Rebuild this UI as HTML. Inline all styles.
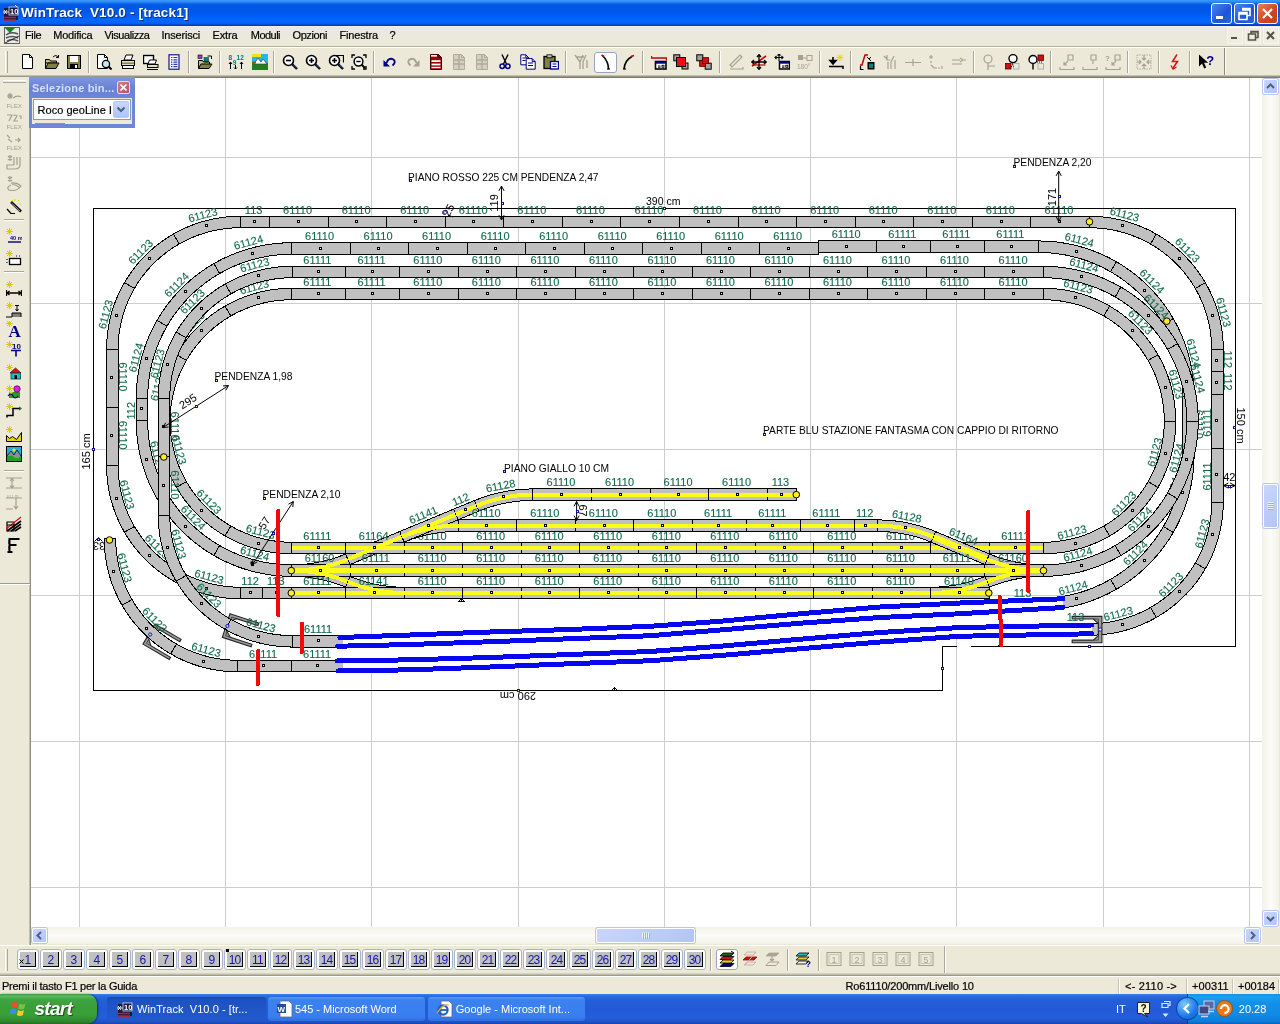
<!DOCTYPE html>
<html lang="it">
<head>
<meta charset="utf-8">
<title>WinTrack V10.0 - [track1]</title>
<style>
*{box-sizing:border-box;margin:0;padding:0}
html,body{width:1280px;height:1024px;overflow:hidden;background:#ece9d8;font-family:"Liberation Sans",sans-serif;font-size:11px;color:#000}
#root{position:absolute;left:0;top:0;width:1280px;height:1024px;will-change:transform}
.abs{position:absolute}
#titlebar{position:absolute;left:0;top:0;width:1280px;height:26px;background:linear-gradient(180deg,#3a9aff 0,#2f8af8 7%,#0a60e8 15%,#0057e4 22%,#0058e8 45%,#005cf2 60%,#0066ff 74%,#0a64ff 84%,#0060f4 90%,#0048c8 95%,#0034a8 100%)}
#titlebar .t{position:absolute;left:21px;top:4px;font-weight:bold;font-size:13.5px;color:#fff;white-space:pre;letter-spacing:.2px;text-shadow:1px 1px 0 #0a2a80}
.capbtn{position:absolute;top:3px;width:21px;height:21px;border:1px solid #fff;border-radius:3px;background:linear-gradient(135deg,#4a86f0,#1e55d8 60%,#2a63e0)}
.capbtn.close{background:linear-gradient(135deg,#e8805e,#d0431e 60%,#c8401e)}
#menubar{position:absolute;left:0;top:26px;width:1280px;height:20px;background:linear-gradient(180deg,#f2f2f6 0,#e9e8e4 10%,#ebe9dc 50%,#ece9d8 100%)}
#menubar span{position:absolute;top:3px;font-size:11px;white-space:pre;-webkit-text-stroke:.2px #000}
#toolbar{position:absolute;left:0;top:46px;width:1280px;height:31px;background:#ece9d8;border-top:1px solid #b4b0a0;box-shadow:inset 0 1px 0 #fff}
.sep{position:absolute;width:2px;border-left:1px solid #aca899;border-right:1px solid #fff}
#leftbar{position:absolute;left:0;top:77px;width:30px;height:868px;background:#ece9d8}
#canvas{position:absolute;left:31px;top:78px;width:1231px;height:849px;background:#fff;overflow:hidden}
#vscroll{position:absolute;left:1262px;top:78px;width:17px;height:849px;background:linear-gradient(90deg,#f3f2ea,#fcfcf8 50%,#f3f2ea)}
#hscroll{position:absolute;left:31px;top:927px;width:1231px;height:17px;background:linear-gradient(180deg,#f3f2ea,#fcfcf8 50%,#f3f2ea)}
.sbtn{position:absolute;width:15px;height:15px;border:1px solid #fff;border-radius:2px;background:linear-gradient(135deg,#c9d6fb,#b3c5f5);box-shadow:0 0 0 1px #b8c6ea}
#levelbar{position:absolute;left:0;top:945px;width:1280px;height:31px;background:#ece9d8}
.lv{position:absolute;top:4px;width:22px;height:21px;border:1px solid #aab4c8;border-radius:3px;background:#fff}
.lv i{position:absolute;left:2px;top:2px;width:16px;height:15px;background:#c0c0c0;border-right:1px solid #000;border-bottom:1px solid #000;font-style:normal;color:#1414b8;font-size:12px;line-height:17px;text-align:center;letter-spacing:-.8px;text-indent:0}
#status{position:absolute;left:0;top:976px;width:1280px;height:18px;background:#ece9d8;border-top:1px solid #fff}
#status span{position:absolute;top:2px;font-size:11px;white-space:pre;-webkit-text-stroke:.2px #000}
#taskbar{position:absolute;left:0;top:994px;width:1280px;height:30px;background:linear-gradient(180deg,#3a80e8 0,#2a6ae0 8%,#245edb 20%,#2259d6 50%,#245edc 80%,#1f50c4 94%,#1a42a8 100%)}
#start{position:absolute;left:0;top:0;width:97px;height:30px;border-radius:0 10px 10px 0;background:linear-gradient(180deg,#3f9a3f 0,#5cb85c 8%,#3fa33f 18%,#3a9f3a 45%,#38a038 70%,#2f8a2f 90%,#246c24 100%);box-shadow:1px 0 2px rgba(0,0,40,.5)}
#start b{position:absolute;left:35px;top:3px;font-size:19px;font-style:italic;color:#fff;text-shadow:1px 1px 1px #1a4a1a;letter-spacing:0}
.tb{position:absolute;top:3px;height:24px;border-radius:3px;background:linear-gradient(180deg,#5a98f0 0,#3c81f0 12%,#3a7ff0 80%,#2f6fe0 100%);color:#fff;font-size:11px;white-space:pre}
.tb.act{background:linear-gradient(180deg,#1a48b0 0,#1e52c4 15%,#2259cc 100%)}
.tb span{position:absolute;top:5px}
#tray{position:absolute;left:1187px;top:0;width:93px;height:30px;background:linear-gradient(180deg,#1a90e8 0,#16a0f0 10%,#1290e8 30%,#0f8ae6 70%,#0e7cd8 92%,#0a5cc0 100%);border-left:1px solid #0a3a90}
</style>
</head>
<body>
<div id="root">
<div id="titlebar">
<svg style="position:absolute;left:3px;top:4px" width="16" height="18" viewBox="0 0 16 18"><rect x="1" y="4" width="14" height="12" fill="#181840"/><rect x="6" y="3" width="9" height="8" fill="#181840" stroke="#e0e0f0" stroke-width=".8"/><text x="7" y="10" font-size="7.5" font-weight="bold" font-family="'Liberation Sans',sans-serif" fill="#fff">10</text><path d="M0,8 h6 M1,6 l3,4 M4,6 l-3,4" stroke="#e8e8e8" stroke-width="1" fill="none"/><path d="M1,13.5 h12 M1,16 h12" stroke="#c02020" stroke-width="1.6"/><path d="M12,1 l2,2" stroke="#fff" stroke-width="1"/></svg>
<span id="t1" style="position:absolute;left:21px;top:5px;font-size:13.5px;line-height:16.5px;color:#fff;font-weight:bold;font-style:normal;white-space:pre;letter-spacing:0.156px;text-shadow:1px 1px 0 #10307a;">WinTrack  V10.0 - [track1]</span>
<div class="capbtn" style="left:1211px"><svg width="19" height="19" viewBox="0 0 19 19"><rect x="4" y="12" width="7" height="3" fill="#fff"/></svg></div>
<div class="capbtn" style="left:1234px"><svg width="19" height="19" viewBox="0 0 19 19"><path d="M7,4.5 h8 v7 h-3 M7,6 h8" stroke="#fff" stroke-width="1.6" fill="none"/><path d="M4,8.5 h8 v7 h-8z M4,10 h8" stroke="#fff" stroke-width="1.6" fill="none"/></svg></div>
<div class="capbtn close" style="left:1257px"><svg width="19" height="19" viewBox="0 0 19 19"><path d="M5,5 L14,14 M14,5 L5,14" stroke="#fff" stroke-width="2.2" fill="none"/></svg></div>
</div>
<div id="menubar">
<svg style="position:absolute;left:4px;top:1px" width="16" height="17" viewBox="0 0 16 17"><rect x=".5" y=".5" width="15" height="16" fill="#e8ece8" stroke="#606060"/><path d="M1,1 h10 l-5,5z" fill="#208020"/><path d="M2,8 q5,-4 12,-1 M2,11 q6,-3 12,0 M3,14 q5,-3 11,0" stroke="#505050" stroke-width="1.4" fill="none"/><path d="M1,16 L15,9" stroke="#303030"/></svg>
<span id="t2" style="position:absolute;left:25px;top:2px;font-size:11px;line-height:14px;color:#000;font-weight:normal;font-style:normal;white-space:pre;letter-spacing:-0.359px;">File</span>
<span id="t3" style="position:absolute;left:53.2px;top:2px;font-size:11px;line-height:14px;color:#000;font-weight:normal;font-style:normal;white-space:pre;letter-spacing:-0.209px;">Modifica</span>
<span id="t4" style="position:absolute;left:104.5px;top:2px;font-size:11px;line-height:14px;color:#000;font-weight:normal;font-style:normal;white-space:pre;letter-spacing:-0.433px;">Visualizza</span>
<span id="t5" style="position:absolute;left:161.5px;top:2px;font-size:11px;line-height:14px;color:#000;font-weight:normal;font-style:normal;white-space:pre;letter-spacing:-0.205px;">Inserisci</span>
<span id="t6" style="position:absolute;left:212.5px;top:2px;font-size:11px;line-height:14px;color:#000;font-weight:normal;font-style:normal;white-space:pre;letter-spacing:-0.138px;">Extra</span>
<span id="t7" style="position:absolute;left:250.8px;top:2px;font-size:11px;line-height:14px;color:#000;font-weight:normal;font-style:normal;white-space:pre;letter-spacing:-0.534px;">Moduli</span>
<span id="t8" style="position:absolute;left:292.5px;top:2px;font-size:11px;line-height:14px;color:#000;font-weight:normal;font-style:normal;white-space:pre;letter-spacing:-0.4px;">Opzioni</span>
<span id="t9" style="position:absolute;left:339.5px;top:2px;font-size:11px;line-height:14px;color:#000;font-weight:normal;font-style:normal;white-space:pre;letter-spacing:-0.156px;">Finestra</span>
<span id="t10" style="position:absolute;left:389.5px;top:2px;font-size:11px;line-height:14px;color:#000;font-weight:normal;font-style:normal;white-space:pre;letter-spacing:-0.625px;">?</span>
<svg style="position:absolute;left:1227px;top:1px" width="16" height="17" viewBox="0 0 16 17"><rect x=".5" y=".5" width="15" height="16" fill="#efede2" stroke="#f6f5ee"/><path d="M4,11 h6" stroke="#55534a" stroke-width="2" fill="none"/></svg>
<svg style="position:absolute;left:1245px;top:1px" width="16" height="17" viewBox="0 0 16 17"><rect x=".5" y=".5" width="15" height="16" fill="#efede2" stroke="#f6f5ee"/><path d="M3.5,7 h7 v6 h-7z M6,7 v-2.5 h7 v6 h-2.5 M6,5 h7" stroke="#55534a" stroke-width="1.6" fill="none"/></svg>
<svg style="position:absolute;left:1263px;top:1px" width="16" height="17" viewBox="0 0 16 17"><rect x=".5" y=".5" width="15" height="16" fill="#efede2" stroke="#f6f5ee"/><path d="M4,5 l7,7 M11,5 l-7,7" stroke="#55534a" stroke-width="2" fill="none"/></svg>
</div>
<div id="toolbar">
<div style="position:absolute;left:5px;top:4px;width:3px;height:22px;border-left:1px solid #fff;border-right:1px solid #aca899"></div>
<svg class="ic" style="position:absolute;left:20px;top:7px" width="16" height="16" viewBox="0 0 16 16"><path d="M2.5,0.5 h7 l3,3 v11 h-10 z" fill="#fff" stroke="#000" stroke-width="1" /><path d="M9.5,0.5 v3 h3" fill="none" stroke="#000" stroke-width="1" /></svg>
<svg class="ic" style="position:absolute;left:44px;top:7px" width="16" height="16" viewBox="0 0 16 16"><path d="M1.5,5.5 h4 l1,1.5 h6 v2 h-11z" fill="#c0c080" stroke="#000" stroke-width="1" /><path d="M1.5,14.5 l2.5,-5.5 h11 l-3,5.5z" fill="#808040" stroke="#000" stroke-width="1" /><path d="M1.5,14.5 v-9" fill="none" stroke="#000" stroke-width="1" /><path d="M9,3 q3,-3 5.5,0.5 M14.5,3.5 v-2.5 M14.5,3.5 h-2.5" fill="none" stroke="#000" stroke-width="1" /></svg>
<svg class="ic" style="position:absolute;left:66px;top:7px" width="16" height="16" viewBox="0 0 16 16"><rect x="1.5" y="1.5" width="13" height="13" fill="#808040" stroke="#000" stroke-width="1"/><rect x="4" y="2" width="8" height="6" fill="#fff"/><rect x="4" y="10" width="8" height="4.5" fill="#000"/><rect x="9" y="11" width="2" height="3" fill="#fff"/></svg>
<div class="sep" style="left:88px;top:4px;height:22px"></div>
<svg class="ic" style="position:absolute;left:96px;top:7px" width="16" height="16" viewBox="0 0 16 16"><path d="M1.5,0.5 h7 l3,3 v11 h-10 z" fill="#fff" stroke="#000" stroke-width="1" /><path d="M8.5,0.5 v3 h3" fill="none" stroke="#000" stroke-width="1" /><circle cx="10" cy="10" r="3.6" fill="#c8e8f0" stroke="#000" stroke-width="1.3"/><path d="M12.5,12.5 L15.5,15.5" fill="none" stroke="#000" stroke-width="2" /></svg>
<svg class="ic" style="position:absolute;left:120px;top:7px" width="16" height="16" viewBox="0 0 16 16"><path d="M4,6 l2,-5 h7 l-2,5z" fill="#fff" stroke="#000" stroke-width="1" /><rect x="1.5" y="6.5" width="13" height="5" fill="#e0e0c0" stroke="#000" stroke-width="1"/><rect x="2.5" y="11.5" width="11" height="3" fill="#fff" stroke="#000" stroke-width="1"/><rect x="2" y="8.5" width="12" height="1.4" fill="#808040"/></svg>
<svg class="ic" style="position:absolute;left:143px;top:7px" width="16" height="16" viewBox="0 0 16 16"><rect x="0.5" y="1.5" width="10" height="8" fill="#fff" stroke="#000" stroke-width="1.4"/><path d="M5,10 l1.5,-4 h7 l-1.5,4z" fill="#fff" stroke="#000" stroke-width="1" /><rect x="4.5" y="10.5" width="10.5" height="3" fill="#e0e0c0" stroke="#000" stroke-width="1"/><path d="M4,15.5 h11" fill="none" stroke="#000" stroke-width="1" /></svg>
<svg class="ic" style="position:absolute;left:166px;top:7px" width="16" height="16" viewBox="0 0 16 16"><rect x="3" y="0.8" width="10" height="14.4" fill="#fff" stroke="#000080" stroke-width="1.1"/><path d="M5,3.5 h1.4 M7.4,3.5 h4" fill="none" stroke="#2040c0" stroke-width="1.2" /><path d="M5,5.8 h1.4 M7.4,5.8 h4" fill="none" stroke="#2040c0" stroke-width="1.2" /><path d="M5,8.1 h1.4 M7.4,8.1 h4" fill="none" stroke="#2040c0" stroke-width="1.2" /><path d="M5,10.4 h1.4 M7.4,10.4 h4" fill="none" stroke="#2040c0" stroke-width="1.2" /><path d="M5,12.7 h1.4 M7.4,12.7 h4" fill="none" stroke="#2040c0" stroke-width="1.2" /></svg>
<div class="sep" style="left:188px;top:4px;height:22px"></div>
<svg class="ic" style="position:absolute;left:197px;top:7px" width="16" height="16" viewBox="0 0 16 16"><rect x="1" y="1" width="4" height="3.4" fill="#a040c0" stroke="#000" stroke-width="0.6"/><rect x="7" y="3.5" width="4.5" height="4.5" fill="#008080" stroke="#204040" stroke-width="0.6"/><path d="M10.5,2 h4 v3" fill="none" stroke="#000" stroke-width="1" /><path d="M1.5,14.5 v-8 h4 l1,1.5 h6 v2" fill="#c0c080" stroke="#000" stroke-width="1" /><path d="M1.5,14.5 l2.5,-4.5 h11 l-3,4.5z" fill="#808040" stroke="#000" stroke-width="1" /></svg>
<div class="sep" style="left:219px;top:4px;height:22px"></div>
<svg class="ic" style="position:absolute;left:228px;top:7px" width="16" height="16" viewBox="0 0 16 16"><text x="0.5" y="6.2" font-size="6.5" font-weight="bold" fill="#008080" font-family="'Liberation Sans',sans-serif">8</text><text x="4.8" y="10.5" font-size="6.5" font-weight="bold" fill="#008080" font-family="'Liberation Sans',sans-serif">9</text><text x="8.6" y="6.2" font-size="6.5" font-weight="bold" fill="#008080" font-family="'Liberation Sans',sans-serif">12</text><path d="M2.5,15 v-7 M1,10 l1.5,-2 1.5,2 M13.5,15 v-7 M12,10 l1.5,-2 1.5,2 M7.5,11 v4 M6,13.5 l1.5,1.5 1.5,-1.5" fill="none" stroke="#000" stroke-width="1" /></svg>
<svg class="ic" style="position:absolute;left:252px;top:7px" width="16" height="16" viewBox="0 0 16 16"><rect x="0" y="0" width="16" height="16" fill="#20b8e8"/><rect x="0" y="0" width="9" height="3" fill="#f0e020"/><rect x="0" y="9" width="16" height="7" fill="#208020"/><path d="M2,10 l4,-6 3,4 2,-3 4,5z" fill="#fff" stroke="#404040" stroke-width="0.7" /><rect x="0" y="7.5" width="4" height="2" fill="#806020"/></svg>
<div class="sep" style="left:273px;top:4px;height:22px"></div>
<svg class="ic" style="position:absolute;left:282px;top:7px" width="16" height="16" viewBox="0 0 16 16"><circle cx="6.5" cy="6.5" r="5" fill="#fff" stroke="#000" stroke-width="1.6"/><path d="M10,10 L15,15" fill="none" stroke="#000" stroke-width="2.4" /><path d="M11,10.5 L15,14.5" fill="none" stroke="#3060c0" stroke-width="1" /><path d="M4,6.5 h5" fill="none" stroke="#000" stroke-width="1.6" /></svg>
<svg class="ic" style="position:absolute;left:305px;top:7px" width="16" height="16" viewBox="0 0 16 16"><circle cx="6.5" cy="6.5" r="5" fill="#fff" stroke="#000" stroke-width="1.6"/><path d="M10,10 L15,15" fill="none" stroke="#000" stroke-width="2.4" /><path d="M11,10.5 L15,14.5" fill="none" stroke="#3060c0" stroke-width="1" /><path d="M4,6.5 h5" fill="none" stroke="#000" stroke-width="1.6" /><path d="M6.5,4 v5" fill="none" stroke="#000" stroke-width="1.6" /></svg>
<svg class="ic" style="position:absolute;left:328px;top:7px" width="16" height="16" viewBox="0 0 16 16"><path d="M8,1.5 h7.5 v7" fill="none" stroke="#000" stroke-width="1.2" /><circle cx="6.5" cy="6.5" r="5" fill="#fff" stroke="#000" stroke-width="1.6"/><path d="M10,10 L15,15" fill="none" stroke="#000" stroke-width="2.4" /><path d="M11,10.5 L15,14.5" fill="none" stroke="#3060c0" stroke-width="1" /><path d="M4,6.5 h5" fill="none" stroke="#000" stroke-width="1.6" /><path d="M6.5,4 v5" fill="none" stroke="#000" stroke-width="1.6" /></svg>
<svg class="ic" style="position:absolute;left:351px;top:7px" width="16" height="16" viewBox="0 0 16 16"><path d="M1,4 v-3 h3 M12,1 h3 v3 M1,12 v3 h3 M15,12 v3 h-3" fill="none" stroke="#000" stroke-width="1.3" /><circle cx="7.5" cy="7.5" r="4.4" fill="#fff" stroke="#000" stroke-width="1.5"/><path d="M5.3,7.5 h4.4" fill="none" stroke="#000" stroke-width="1.4" /><path d="M10.6,10.6 L14,14" fill="none" stroke="#000" stroke-width="2" /></svg>
<div class="sep" style="left:373px;top:4px;height:22px"></div>
<svg class="ic" style="position:absolute;left:382px;top:7px" width="16" height="16" viewBox="0 0 16 16"><path d="M4.5,9 q2,-6 7,-3.5 q3,2.5 -1,6" fill="none" stroke="#000080" stroke-width="1.8" /><path d="M1.5,6 v6.5 h6.5z" fill="#000080" /></svg>
<svg class="ic" style="position:absolute;left:405px;top:7px" width="16" height="16" viewBox="0 0 16 16"><g transform="translate(16 0) scale(-1 1)"><path d="M4.5,9 q2,-6 7,-3.5 q3,2.5 -1,6" fill="none" stroke="#a6a292" stroke-width="1.8" /><path d="M1.5,6 v6.5 h6.5z" fill="#a6a292" /></g></svg>
<svg class="ic" style="position:absolute;left:428px;top:7px" width="16" height="16" viewBox="0 0 16 16"><path d="M2.5,0.5 h8 l3,3 v12 h-11 z" fill="#a00000" stroke="#400000" stroke-width="1" /><path d="M10.5,0.5 v3 h3" fill="none" stroke="#400000" stroke-width="1" /><rect x="3.5" y="6.2" width="9" height="1.8" fill="#fff"/><rect x="3.5" y="9.6" width="9" height="1.8" fill="#fff"/><rect x="3.5" y="12.8" width="9" height="1.4" fill="#fff"/><rect x="3" y="1" width="6" height="1.6" fill="#fff"/></svg>
<svg class="ic" style="position:absolute;left:451px;top:7px" width="16" height="16" viewBox="0 0 16 16"><path d="M2.5,0.5 h8 l3,3 v12 h-11 z" fill="#d4d0c0" stroke="#b0ac9c" stroke-width="1" /><path d="M10.5,0.5 v3 h3" fill="none" stroke="#b0ac9c" stroke-width="1" /><path d="M3,6 h10 M3,10 h10 M8,1 v14" fill="none" stroke="#b0ac9c" stroke-width="1.4" /></svg>
<svg class="ic" style="position:absolute;left:474px;top:7px" width="16" height="16" viewBox="0 0 16 16"><path d="M2.5,0.5 h8 l3,3 v12 h-11 z" fill="#d4d0c0" stroke="#b0ac9c" stroke-width="1" /><path d="M10.5,0.5 v3 h3" fill="none" stroke="#b0ac9c" stroke-width="1" /><path d="M3,6 h10 M3,10 h10 M8,1 v14" fill="none" stroke="#b0ac9c" stroke-width="1.4" /></svg>
<svg class="ic" style="position:absolute;left:497px;top:7px" width="16" height="16" viewBox="0 0 16 16"><path d="M5,.5 L9.5,10 M11,.5 L6.5,10" fill="none" stroke="#000" stroke-width="1.4" /><circle cx="5.2" cy="12.3" r="2.2" fill="none" stroke="#000080" stroke-width="1.5"/><circle cx="10.8" cy="12.3" r="2.2" fill="none" stroke="#000080" stroke-width="1.5"/></svg>
<svg class="ic" style="position:absolute;left:520px;top:7px" width="16" height="16" viewBox="0 0 16 16"><path d="M0.8,0.8 h5 l3,3 v7 h-8 z" fill="#fff" stroke="#000080" stroke-width="1" /><path d="M5.800000000000001,0.8 v3 h3" fill="none" stroke="#000080" stroke-width="1" /><path d="M6.2,4.6 h6 l3,3 v7.6 h-9 z" fill="#fff" stroke="#000080" stroke-width="1" /><path d="M12.2,4.6 v3 h3" fill="none" stroke="#000080" stroke-width="1" /><path d="M8,9 h5 M8,11.5 h5 M2.5,4 h3 M2.5,6.5 h3" fill="none" stroke="#000080" stroke-width="1" /></svg>
<svg class="ic" style="position:absolute;left:543px;top:7px" width="16" height="16" viewBox="0 0 16 16"><rect x="1" y="2.5" width="11" height="12" fill="#808040" stroke="#000" stroke-width="1.3"/><rect x="4" y="0.8" width="5" height="3" fill="#c0c0c0" stroke="#000" stroke-width="0.8"/><rect x="7.5" y="7.5" width="8" height="7.5" fill="#fff" stroke="#000080" stroke-width="1.3"/><path d="M9.5,10 h4 M9.5,12.5 h4" fill="none" stroke="#000080" stroke-width="1" /></svg>
<div class="sep" style="left:565px;top:4px;height:22px"></div>
<svg class="ic" style="position:absolute;left:574px;top:7px" width="16" height="16" viewBox="0 0 16 16"><path d="M1,1 l5,7 v7 M9,1 l-3,7 M12,1 l-3,7 v7 M13,6 v8 M3,3 h7" fill="none" stroke="#a6a292" stroke-width="1.3" /></svg>
<div style="position:absolute;left:594px;top:5px;width:23px;height:21px;background:#fff;border:1px solid #98a4c0;border-radius:3px"></div>
<svg class="ic" style="position:absolute;left:598px;top:7px" width="16" height="16" viewBox="0 0 16 16"><path d="M4.5,1.5 q6,6 6,13.5" fill="none" stroke="#000" stroke-width="1.6" /><path d="M3.5,1 l2.5,1.5" fill="none" stroke="#c00000" stroke-width="1.6" /><path d="M9,15 h3" fill="none" stroke="#000" stroke-width="1.2" /></svg>
<svg class="ic" style="position:absolute;left:621px;top:7px" width="16" height="16" viewBox="0 0 16 16"><path d="M3,15 q1,-9 8,-12.5" fill="none" stroke="#000" stroke-width="1.6" /><path d="M10,2.5 l3,-1" fill="none" stroke="#c00000" stroke-width="1.6" /><path d="M2,15 h3" fill="none" stroke="#000" stroke-width="1.2" /></svg>
<div class="sep" style="left:642px;top:4px;height:22px"></div>
<svg class="ic" style="position:absolute;left:651px;top:7px" width="16" height="16" viewBox="0 0 16 16"><path d="M.5,2 v2 h15 v2.5" fill="none" stroke="#c00000" stroke-width="1.3" /><rect x="4.5" y="7.5" width="10.5" height="7.5" fill="#fff" stroke="#000" stroke-width="1.6"/><rect x="4.5" y="7.5" width="10.5" height="2.2" fill="#000080"/><path d="M7,12 h2.5 M7,13.3 h2.5" fill="none" stroke="#000" stroke-width="0.9" /><rect x="11" y="11.3" width="2" height="2" fill="#fff" stroke="#000" stroke-width="0.9"/></svg>
<svg class="ic" style="position:absolute;left:673px;top:7px" width="16" height="16" viewBox="0 0 16 16"><rect x="0.8" y="0.8" width="6" height="6" fill="#a0a0a0" stroke="#000" stroke-width="1"/><rect x="9" y="9" width="6" height="6" fill="#a0a0a0" stroke="#000" stroke-width="1"/><rect x="3.5" y="3.5" width="9" height="9" fill="#ee1010" stroke="#000" stroke-width="1"/></svg>
<svg class="ic" style="position:absolute;left:696px;top:7px" width="16" height="16" viewBox="0 0 16 16"><rect x="0.8" y="0.8" width="6" height="6" fill="#a0a0a0" stroke="#000" stroke-width="1"/><rect x="9.2" y="9.2" width="6" height="6" fill="#a0a0a0" stroke="#000" stroke-width="1"/><rect x="3.6" y="6.4" width="6" height="6" fill="#d01010" stroke="#500000" stroke-width="0.8"/><rect x="6.6" y="3.6" width="6" height="6" fill="#d01010" stroke="#500000" stroke-width="0.8"/></svg>
<div class="sep" style="left:719px;top:4px;height:22px"></div>
<svg class="ic" style="position:absolute;left:728px;top:7px" width="16" height="16" viewBox="0 0 16 16"><path d="M2,11 L12,1 l2,2 L4,13z M2,15 h13 v-2" fill="none" stroke="#a6a292" stroke-width="1.2" /></svg>
<svg class="ic" style="position:absolute;left:751px;top:7px" width="16" height="16" viewBox="0 0 16 16"><path d="M1,12 L15,2" fill="none" stroke="#c00000" stroke-width="1.6" /><path d="M1.5,11 h13" fill="none" stroke="#c00000" stroke-width="1.2" /><path d="M8,1 v14 M1,8 h14 M6,3 l2,-2.4 2,2.4 M6,13 l2,2.4 2,-2.4 M3,6 l-2.4,2 2.4,2 M13,6 l2.4,2 -2.4,2" fill="none" stroke="#000" stroke-width="1.3" /></svg>
<svg class="ic" style="position:absolute;left:774px;top:7px" width="16" height="16" viewBox="0 0 16 16"><path d="M5,0 v7 M1,3.5 h8 M3.5,1.5 l1.5,-1.5 1.5,1.5 M2.5,2 l-1.5,1.5 1.5,1.5 M7.5,2 l1.5,1.5 -1.5,1.5" fill="none" stroke="#000" stroke-width="1.1" /><rect x="5.5" y="7.5" width="10" height="7.5" fill="#fff" stroke="#000" stroke-width="1.5"/><rect x="5.5" y="7.5" width="10" height="2.2" fill="#000080"/><path d="M8,12 h2.5 M8,13.3 h2.5" fill="none" stroke="#000" stroke-width="0.9" /><rect x="11.8" y="11.3" width="2" height="2" fill="#fff" stroke="#000" stroke-width="0.9"/></svg>
<svg class="ic" style="position:absolute;left:797px;top:7px" width="16" height="16" viewBox="0 0 16 16"><rect x="1" y="1" width="5" height="5" fill="#a6a292"/><rect x="10" y="1.5" width="5" height="5" fill="none" stroke="#a6a292" stroke-width="1"/><path d="M6,4 h4" fill="none" stroke="#a6a292" stroke-width="1" /><text x="0" y="15" font-size="6.5" font-weight="normal" fill="#a6a292" font-family="'Liberation Sans',sans-serif">180°</text></svg>
<div class="sep" style="left:819px;top:4px;height:22px"></div>
<svg class="ic" style="position:absolute;left:828px;top:7px" width="16" height="16" viewBox="0 0 16 16"><path d="M12.0,0 v7 M8.5,3.5 h7 M9.5,1 l5,5 M14.5,1 l-5,5" fill="none" stroke="#e8d800" stroke-width="1" /><path d="M5,3 v6 M2,6.5 l3,3.5 3,-3.5z" fill="#000" stroke="#000" stroke-width="1.6" /><path d="M1,12.5 h14 v2.5" fill="none" stroke="#000" stroke-width="1.5" /></svg>
<div class="sep" style="left:850px;top:4px;height:22px"></div>
<svg class="ic" style="position:absolute;left:859px;top:7px" width="16" height="16" viewBox="0 0 16 16"><path d="M1,11 l2,0 3,-10 h3" fill="none" stroke="#c00000" stroke-width="1.5" /><path d="M1.5,12 v3.5 h3" fill="none" stroke="#000" stroke-width="1.2" /><rect x="8.5" y="8" width="7" height="7.5" fill="#000"/><rect x="10" y="9.5" width="4" height="4.5" fill="#008080"/><path d="M8,3 l4,4 M12,3 l-2,2" fill="none" stroke="#000" stroke-width="1" /></svg>
<svg class="ic" style="position:absolute;left:882px;top:7px" width="16" height="16" viewBox="0 0 16 16"><path d="M2,2 l3,3 M5,1 v5 h3 M12,2 l-3,6 v7 M13,6 v9 M6,8 v7" fill="none" stroke="#a6a292" stroke-width="1.2" /></svg>
<svg class="ic" style="position:absolute;left:905px;top:7px" width="16" height="16" viewBox="0 0 16 16"><path d="M0,8.5 h16 M8,5 v7" fill="none" stroke="#a6a292" stroke-width="1.2" /></svg>
<svg class="ic" style="position:absolute;left:928px;top:7px" width="16" height="16" viewBox="0 0 16 16"><path d="M3,1 v4 M1,3 h4 M3,7 v2 M3,11 l3,3 h3 M10,14 h2 M14,12 v3" fill="none" stroke="#a6a292" stroke-width="1.2" /></svg>
<svg class="ic" style="position:absolute;left:951px;top:7px" width="16" height="16" viewBox="0 0 16 16"><path d="M1,6 h8 M1,10 h10 M9,4 l3,2 -3,2 M13,6 h2" fill="none" stroke="#a6a292" stroke-width="1.2" /></svg>
<div class="sep" style="left:973px;top:4px;height:22px"></div>
<svg class="ic" style="position:absolute;left:982px;top:7px" width="16" height="16" viewBox="0 0 16 16"><circle cx="6" cy="5" r="4" fill="none" stroke="#a6a292" stroke-width="1.2"/><path d="M6,9 v7 M6,12 h7" fill="none" stroke="#a6a292" stroke-width="1.2" /></svg>
<svg class="ic" style="position:absolute;left:1004px;top:7px" width="16" height="16" viewBox="0 0 16 16"><circle cx="9" cy="4.6" r="4" fill="#fff" stroke="#000" stroke-width="1.4"/><path d="M9,8.5 v3" fill="none" stroke="#000" stroke-width="1.4" /><rect x="1.5" y="9.5" width="5.5" height="5.5" fill="#d01010" stroke="#500000" stroke-width="0.8"/><rect x="9.5" y="9.5" width="5.5" height="5.5" fill="#e8e8e0" stroke="#b0b0a8" stroke-width="1"/><path d="M7,12.5 h2.5" fill="none" stroke="#000" stroke-width="1" stroke-dasharray="1 1"/></svg>
<svg class="ic" style="position:absolute;left:1028px;top:7px" width="16" height="16" viewBox="0 0 16 16"><circle cx="5" cy="5.5" r="4" fill="#fff" stroke="#000" stroke-width="1.4"/><path d="M5,9.5 v6" fill="none" stroke="#000" stroke-width="1.4" /><rect x="10" y="1" width="5.5" height="5.5" fill="#d01010" stroke="#500000" stroke-width="0.8"/><rect x="10" y="9.5" width="5.5" height="5.5" fill="#e8e8e0" stroke="#b0b0a8" stroke-width="1"/><path d="M9,8 h6" fill="none" stroke="#000" stroke-width="1" stroke-dasharray="1 1"/></svg>
<div class="sep" style="left:1050px;top:4px;height:22px"></div>
<svg class="ic" style="position:absolute;left:1059px;top:7px" width="16" height="16" viewBox="0 0 16 16"><path d="M9,1 h5 v5 h-5z M9,7 l-4,4 M5,8 v3 h3 M1,13 v2.5 h14 v-2.5" fill="none" stroke="#a6a292" stroke-width="1.2" /></svg>
<svg class="ic" style="position:absolute;left:1082px;top:7px" width="16" height="16" viewBox="0 0 16 16"><path d="M9,1 h5 v5 h-5z M1,13 v2.5 h14 v-2.5 M11,6 v4" fill="none" stroke="#a6a292" stroke-width="1.2" /></svg>
<svg class="ic" style="position:absolute;left:1105px;top:7px" width="16" height="16" viewBox="0 0 16 16"><path d="M10,1 h5 v5 h-5z M11,7 l-4,4 M7,8 v3 h3 M1,13 v2.5 h14 v-2.5" fill="none" stroke="#a6a292" stroke-width="1.2" /><text x="0" y="7" font-size="8" font-weight="bold" fill="#a6a292" font-family="'Liberation Sans',sans-serif">?</text></svg>
<div class="sep" style="left:1127px;top:4px;height:22px"></div>
<svg class="ic" style="position:absolute;left:1136px;top:7px" width="16" height="16" viewBox="0 0 16 16"><path d="M1,1 h14 v14 h-14z" fill="none" stroke="#a6a292" stroke-width="1" stroke-dasharray="1.2 1.2"/><path d="M8,1 v5 M6,4 l2,2 2,-2 M8,15 v-5 M6,12 l2,-2 2,2 M1,8 h4 M3,6 l2,2 -2,2 M15,8 h-4 M13,6 l-2,2 2,2" fill="none" stroke="#a6a292" stroke-width="1.2" /></svg>
<div class="sep" style="left:1158px;top:4px;height:22px"></div>
<svg class="ic" style="position:absolute;left:1168px;top:7px" width="16" height="16" viewBox="0 0 16 16"><path d="M9,0.5 L4.5,7.5 h5 L5,14" fill="none" stroke="#e01010" stroke-width="1.5" /><path d="M3,11.5 l2,3.5 3.5,-2" fill="none" stroke="#e01010" stroke-width="1.3" /></svg>
<div class="sep" style="left:1189px;top:4px;height:22px"></div>
<svg class="ic" style="position:absolute;left:1198px;top:7px" width="16" height="16" viewBox="0 0 16 16"><path d="M1,.5 v12 l3,-3 2.2,5 2,-1 -2.2,-4.8 h4.2z" fill="#000" /><text x="8.2" y="11" font-size="13" font-weight="bold" fill="#000080" font-family="'Liberation Sans',sans-serif">?</text></svg>
<div style="position:absolute;left:1224px;top:1px;width:2px;height:28px;border-left:1px solid #8c8878;border-right:1px solid #fff"></div>
<div style="position:absolute;left:0;top:28px;width:1280px;height:3px;background:linear-gradient(180deg,#d8d4c4,#9c9888 50%,#6c6a60)"></div>
</div>
<div id="leftbar">
<div style="position:absolute;left:3px;top:3px;width:23px;height:3px;border-top:1px solid #fff;border-bottom:1px solid #aca899"></div>
<svg class="ic" style="position:absolute;left:6px;top:15px" width="16" height="16" viewBox="0 0 16 16"><path d="M4,1 v6 M1,4 h6 M2,2 l4,4 M6,2 l-4,4 M7,6 q4,-3 8,-1" fill="none" stroke="#a6a292" stroke-width="1.2" /><text x="0.5" y="16" font-size="6.2" font-weight="normal" fill="#a6a292" font-family="'Liberation Sans',sans-serif">FLEX</text></svg>
<svg class="ic" style="position:absolute;left:6px;top:36px" width="16" height="16" viewBox="0 0 16 16"><path d="M1,2 h5 l-3,6 M8,3 q1,-2 3,0 l-3,5 h4 M13,3 h2 v3" fill="none" stroke="#a6a292" stroke-width="1.2" /><text x="0.5" y="16" font-size="6.2" font-weight="normal" fill="#a6a292" font-family="'Liberation Sans',sans-serif">FLEX</text></svg>
<svg class="ic" style="position:absolute;left:6px;top:57px" width="16" height="16" viewBox="0 0 16 16"><path d="M1,1 l3,3 M2,5 l4,3 M9,6 h5 M12,4 l2,2 -2,2" fill="none" stroke="#a6a292" stroke-width="1.2" /><text x="0.5" y="16" font-size="6.2" font-weight="normal" fill="#a6a292" font-family="'Liberation Sans',sans-serif">FLEX</text></svg>
<svg class="ic" style="position:absolute;left:6px;top:78px" width="16" height="16" viewBox="0 0 16 16"><path d="M2,1 l4,4 M6,1 l-4,4 M4,0 v6 M8,2 v8 M11,2 v8 M14,2 v8 q0,4 -6,4 h-7 v-4 h7" fill="none" stroke="#a6a292" stroke-width="1.2" /></svg>
<svg class="ic" style="position:absolute;left:6px;top:99px" width="16" height="16" viewBox="0 0 16 16"><path d="M2,1 l4,4 M6,1 l-4,4 M4,0 v6 M5,7 q6,-1 10,3 q-4,6 -12,4 q-3,-3 2,-5 M6,8 q5,1 8,4" fill="none" stroke="#a6a292" stroke-width="1.2" /></svg>
<svg class="ic" style="position:absolute;left:6px;top:121px" width="16" height="16" viewBox="0 0 16 16"><path d="M5,4 L15,13.5" fill="none" stroke="#000" stroke-width="2.6" /><path d="M5.5,5 L14,13" fill="none" stroke="#fff" stroke-width="0.7" /><path d="M1,11 l4,4.5 h4" fill="none" stroke="#000" stroke-width="1.2" /><path d="M9,1 v2 M12,3 l1,-1 M13,6 h2 M6,2 l1,1" fill="none" stroke="#e8d800" stroke-width="1.1" /></svg>
<div style="position:absolute;left:4px;top:142px;width:20px;height:2px;border-top:1px solid #aca899;border-bottom:1px solid #fff"></div>
<svg class="ic" style="position:absolute;left:6px;top:151px" width="16" height="16" viewBox="0 0 16 16"><path d="M3.5,0 v7 M0,3.5 h7 M1,1 l5,5 M6,1 l-5,5" fill="none" stroke="#d4c818" stroke-width="1" /><path d="M2,14 h13" fill="none" stroke="#000080" stroke-width="1.4" /><text x="4" y="12" font-size="5.5" font-weight="bold" fill="#000080" font-family="'Liberation Sans',sans-serif">40 m</text></svg>
<svg class="ic" style="position:absolute;left:6px;top:173px" width="16" height="16" viewBox="0 0 16 16"><path d="M3.5,0 v7 M0,3.5 h7 M1,1 l5,5 M6,1 l-5,5" fill="none" stroke="#d4c818" stroke-width="1" /><rect x="3.5" y="8.5" width="11" height="6" fill="#fff" stroke="#000" stroke-width="1.3"/><path d="M1,9 v1 M1,12 v1 M10,6 h1 M13,6 h1" fill="none" stroke="#000080" stroke-width="1.2" /></svg>
<div style="position:absolute;left:4px;top:194px;width:20px;height:2px;border-top:1px solid #aca899;border-bottom:1px solid #fff"></div>
<svg class="ic" style="position:absolute;left:6px;top:204px" width="16" height="16" viewBox="0 0 16 16"><path d="M3.5,0 v7 M0,3.5 h7 M1,1 l5,5 M6,1 l-5,5" fill="none" stroke="#d4c818" stroke-width="1" /><path d="M.5,12 h15 M.5,9 v6 M15.5,9 v6 M3.5,10 l-2.5,2 2.5,2 M12.5,10 l2.5,2 -2.5,2" fill="none" stroke="#000" stroke-width="1.3" /></svg>
<svg class="ic" style="position:absolute;left:6px;top:225px" width="16" height="16" viewBox="0 0 16 16"><path d="M3.5,0 v7 M0,3.5 h7 M1,1 l5,5 M6,1 l-5,5" fill="none" stroke="#d4c818" stroke-width="1" /><path d="M0,15 h6 v-4 h9 v4" fill="#808080" stroke="#000" stroke-width="1" /><path d="M11,3 v6 M9,3.5 h4 M9.5,7 l1.5,2 1.5,-2" fill="none" stroke="#000" stroke-width="1" /></svg>
<svg class="ic" style="position:absolute;left:6px;top:244px" width="16" height="16" viewBox="0 0 16 16"><path d="M3.5,-1 v7 M0,2.5 h7 M1,0 l5,5 M6,0 l-5,5" fill="none" stroke="#d4c818" stroke-width="1" /><text x="2.5" y="16" font-size="17" font-weight="bold" fill="#000080" font-family="'Liberation Serif',serif">A</text></svg>
<svg class="ic" style="position:absolute;left:6px;top:264px" width="16" height="16" viewBox="0 0 16 16"><path d="M3.5,0 v7 M0,3.5 h7 M1,1 l5,5 M6,1 l-5,5" fill="none" stroke="#d4c818" stroke-width="1" /><text x="6" y="8" font-size="8" font-weight="bold" fill="#000080" font-family="'Liberation Sans',sans-serif">10</text><path d="M5,9.5 h10 M10,9.5 v6" fill="none" stroke="#000080" stroke-width="1.6" /></svg>
<svg class="ic" style="position:absolute;left:6px;top:287px" width="16" height="16" viewBox="0 0 16 16"><path d="M3.5,0 v7 M0,3.5 h7 M1,1 l5,5 M6,1 l-5,5" fill="none" stroke="#d4c818" stroke-width="1" /><path d="M4,9 l5.5,-5 5.5,5z" fill="#e01010" stroke="#800000" stroke-width="0.8" /><rect x="5" y="9" width="9.5" height="6" fill="#20c0c0" stroke="#004040" stroke-width="0.8"/><rect x="8.5" y="11" width="2.5" height="4" fill="#000"/></svg>
<svg class="ic" style="position:absolute;left:6px;top:307px" width="16" height="16" viewBox="0 0 16 16"><path d="M3.5,1 v7 M0,4.5 h7 M1,2 l5,5 M6,2 l-5,5" fill="none" stroke="#d4c818" stroke-width="1" /><rect x="3" y="8" width="11" height="6" fill="#20a020"/><circle cx="11" cy="5" r="3.2" fill="#e020e0" stroke="#600060" stroke-width="0.8"/><path d="M2,12 q3,-4 5,0 q2,4 5,0" fill="none" stroke="#000080" stroke-width="1.2" /><circle cx="5" cy="8" r="1.6" fill="#f0e020"/></svg>
<svg class="ic" style="position:absolute;left:6px;top:326px" width="16" height="16" viewBox="0 0 16 16"><path d="M3.5,0 v7 M0,3.5 h7 M1,1 l5,5 M6,1 l-5,5" fill="none" stroke="#d4c818" stroke-width="1" /><path d="M1,14.5 v-2 h6 v-7 h7.5" fill="none" stroke="#000" stroke-width="1.5" /><path d="M13,4 l2,1.5 -2,1.5" fill="none" stroke="#208020" stroke-width="1.2" /></svg>
<svg class="ic" style="position:absolute;left:6px;top:349px" width="16" height="16" viewBox="0 0 16 16"><path d="M3.5,0 v7 M0,3.5 h7 M1,1 l5,5 M6,1 l-5,5" fill="none" stroke="#d4c818" stroke-width="1" /><path d="M0.5,15.5 v-6 l3,3 3,-2 4,3 5,-7 v9z" fill="#e8d020" stroke="#000" stroke-width="1" /></svg>
<svg class="ic" style="position:absolute;left:6px;top:369px" width="16" height="16" viewBox="0 0 16 16"><rect x="0.5" y="0.5" width="15" height="15" fill="#20b0e0" stroke="#000" stroke-width="1"/><path d="M1,15 v-5 l4,-5 3,4 3,-5 4,6 v5z" fill="#909090" stroke="#000" stroke-width="0.7" /><path d="M1,11 q4,-3 7,0 q4,3 7,-1 v5 h-14z" fill="#20a020" /><circle cx="8" cy="4" r="1.6" fill="#f0e020"/></svg>
<div style="position:absolute;left:4px;top:393px;width:20px;height:2px;border-top:1px solid #aca899;border-bottom:1px solid #fff"></div>
<svg class="ic" style="position:absolute;left:6px;top:398px" width="16" height="16" viewBox="0 0 16 16"><path d="M0,3 h16 M0,13 h16 M6,3 v10 M4,6 l2,-2.5 2,2.5 M4,10.5 l2,2.5 2,-2.5" fill="none" stroke="#a6a292" stroke-width="1.2" /></svg>
<svg class="ic" style="position:absolute;left:6px;top:418px" width="16" height="16" viewBox="0 0 16 16"><path d="M0,3 h16 M10,3 v11 M8,11 l2,3 2,-3 M0,14 h7" fill="none" stroke="#a6a292" stroke-width="1.2" /><text x="0" y="2.6" font-size="4.5" font-weight="normal" fill="#a6a292" font-family="'Liberation Sans',sans-serif">101 m</text></svg>
<svg class="ic" style="position:absolute;left:6px;top:439px" width="16" height="16" viewBox="0 0 16 16"><path d="M1,6 h7 v9 h-7z" fill="none" stroke="#000" stroke-width="1.2" /><path d="M1,15 L15,5 M5,15 L15,8 M9,15 L15,11" fill="none" stroke="#000" stroke-width="1.8" /><path d="M0,13 L15,1" fill="none" stroke="#e01010" stroke-width="1.3" /><path d="M1,9 h7" fill="none" stroke="#000" stroke-width="1" /></svg>
<svg class="ic" style="position:absolute;left:6px;top:460px" width="16" height="16" viewBox="0 0 16 16"><path d="M3.5,1 v14 M3.5,2 h10 M3.5,8 h7 M1.5,15 h5" fill="none" stroke="#000" stroke-width="2" /><path d="M2,4 h2 M2,6 h2 M2,10 h2 M2,12 h2" fill="none" stroke="#000" stroke-width="1" /></svg>
<div style="position:absolute;left:29px;top:0;width:2px;height:868px;background:linear-gradient(90deg,#d8d4c4,#7c7a70)"></div>
<div style="position:absolute;left:0;top:506px;width:30px;height:2px;border-top:1px solid #9c9a88;border-bottom:1px solid #fff"></div>
</div>
<div id="canvas"><svg width="1231" height="849" viewBox="31 78 1231 849" style="position:absolute;left:0;top:0">
<g shape-rendering="crispEdges" stroke="#cdcdcd" stroke-width="1">
<line x1="79.5" y1="78" x2="79.5" y2="927" stroke="#cdcdcd" stroke-width="1" />
<line x1="225.5" y1="78" x2="225.5" y2="927" stroke="#cdcdcd" stroke-width="1" />
<line x1="371.5" y1="78" x2="371.5" y2="927" stroke="#cdcdcd" stroke-width="1" />
<line x1="518.5" y1="78" x2="518.5" y2="927" stroke="#cdcdcd" stroke-width="1" />
<line x1="664.5" y1="78" x2="664.5" y2="927" stroke="#cdcdcd" stroke-width="1" />
<line x1="810.5" y1="78" x2="810.5" y2="927" stroke="#cdcdcd" stroke-width="1" />
<line x1="956.5" y1="78" x2="956.5" y2="927" stroke="#cdcdcd" stroke-width="1" />
<line x1="1103.5" y1="78" x2="1103.5" y2="927" stroke="#cdcdcd" stroke-width="1" />
<line x1="1249.5" y1="78" x2="1249.5" y2="927" stroke="#cdcdcd" stroke-width="1" />
<line x1="31" y1="157.5" x2="1262" y2="157.5" stroke="#cdcdcd" stroke-width="1" />
<line x1="31" y1="303.5" x2="1262" y2="303.5" stroke="#cdcdcd" stroke-width="1" />
<line x1="31" y1="449.5" x2="1262" y2="449.5" stroke="#cdcdcd" stroke-width="1" />
<line x1="31" y1="595.5" x2="1262" y2="595.5" stroke="#cdcdcd" stroke-width="1" />
<line x1="31" y1="741.5" x2="1262" y2="741.5" stroke="#cdcdcd" stroke-width="1" />
<line x1="31" y1="887.5" x2="1262" y2="887.5" stroke="#cdcdcd" stroke-width="1" />
</g>
<g shape-rendering="crispEdges" fill="none" stroke="#000" stroke-width="1">
<polyline points="956.5,646.5 942.5,646.5 942.5,690.5 93.5,690.5 93.5,208.5 1235.5,208.5 1235.5,646.5 971,646.5"/>
</g>
<style>.b{fill:#c0c0c0;stroke:#000;stroke-width:1px;shape-rendering:crispEdges}.y{fill:none;stroke:#fbfb1c;stroke-width:4px;shape-rendering:crispEdges}.d{fill:#000;shape-rendering:crispEdges}.w{fill:#fff;shape-rendering:crispEdges}.l{font-family:"Liberation Sans",sans-serif;font-size:11px;fill:#126a4c;text-anchor:middle;stroke:#126a4c;stroke-width:.12px}</style>
<polygon class="b" points="240.2,227.75 269.48,227.75 269.48,216.25 240.2,216.25"/>
<path class="d" d="M253,220h3v3h-3z"/><path class="w" d="M254,221h1v1h-1z"/>
<text class="l" x="253.64" y="213.7">113</text>
<polygon class="b" points="269.48,227.75 328.05,227.75 328.05,216.25 269.48,216.25"/>
<path class="d" d="M297,220h3v3h-3z"/><path class="w" d="M298,221h1v1h-1z"/>
<text class="l" x="297.56" y="213.7">61110</text>
<polygon class="b" points="328.05,227.75 386.61,227.75 386.61,216.25 328.05,216.25"/>
<path class="d" d="M355,220h3v3h-3z"/><path class="w" d="M356,221h1v1h-1z"/>
<text class="l" x="356.13" y="213.7">61110</text>
<polygon class="b" points="386.61,227.75 445.18,227.75 445.18,216.25 386.61,216.25"/>
<path class="d" d="M414,220h3v3h-3z"/><path class="w" d="M415,221h1v1h-1z"/>
<text class="l" x="414.7" y="213.7">61110</text>
<polygon class="b" points="445.18,227.75 503.74,227.75 503.74,216.25 445.18,216.25"/>
<path class="d" d="M472,220h3v3h-3z"/><path class="w" d="M473,221h1v1h-1z"/>
<text class="l" x="473.26" y="213.7">61110</text>
<polygon class="b" points="503.74,227.75 562.31,227.75 562.31,216.25 503.74,216.25"/>
<path class="d" d="M531,220h3v3h-3z"/><path class="w" d="M532,221h1v1h-1z"/>
<text class="l" x="531.83" y="213.7">61110</text>
<polygon class="b" points="562.31,227.75 620.88,227.75 620.88,216.25 562.31,216.25"/>
<path class="d" d="M590,220h3v3h-3z"/><path class="w" d="M591,221h1v1h-1z"/>
<text class="l" x="590.39" y="213.7">61110</text>
<polygon class="b" points="620.88,227.75 679.44,227.75 679.44,216.25 620.88,216.25"/>
<path class="d" d="M648,220h3v3h-3z"/><path class="w" d="M649,221h1v1h-1z"/>
<text class="l" x="648.96" y="213.7">61110</text>
<polygon class="b" points="679.44,227.75 738.01,227.75 738.01,216.25 679.44,216.25"/>
<path class="d" d="M707,220h3v3h-3z"/><path class="w" d="M708,221h1v1h-1z"/>
<text class="l" x="707.52" y="213.7">61110</text>
<polygon class="b" points="738.01,227.75 796.57,227.75 796.57,216.25 738.01,216.25"/>
<path class="d" d="M765,220h3v3h-3z"/><path class="w" d="M766,221h1v1h-1z"/>
<text class="l" x="766.09" y="213.7">61110</text>
<polygon class="b" points="796.57,227.75 855.14,227.75 855.14,216.25 796.57,216.25"/>
<path class="d" d="M824,220h3v3h-3z"/><path class="w" d="M825,221h1v1h-1z"/>
<text class="l" x="824.65" y="213.7">61110</text>
<polygon class="b" points="855.14,227.75 913.7,227.75 913.7,216.25 855.14,216.25"/>
<path class="d" d="M882,220h3v3h-3z"/><path class="w" d="M883,221h1v1h-1z"/>
<text class="l" x="883.22" y="213.7">61110</text>
<polygon class="b" points="913.7,227.75 972.27,227.75 972.27,216.25 913.7,216.25"/>
<path class="d" d="M941,220h3v3h-3z"/><path class="w" d="M942,221h1v1h-1z"/>
<text class="l" x="941.79" y="213.7">61110</text>
<polygon class="b" points="972.27,227.75 1030.83,227.75 1030.83,216.25 972.27,216.25"/>
<path class="d" d="M1000,220h3v3h-3z"/><path class="w" d="M1001,221h1v1h-1z"/>
<text class="l" x="1000.35" y="213.7">61110</text>
<polygon class="b" points="1030.83,227.75 1089.4,227.75 1089.4,216.25 1030.83,216.25"/>
<path class="d" d="M1058,220h3v3h-3z"/><path class="w" d="M1059,221h1v1h-1z"/>
<text class="l" x="1058.92" y="213.7">61110</text>
<polygon class="b" points="1089.4,216.25 1097.19,216.47 1104.94,217.15 1112.65,218.27 1120.28,219.83 1127.8,221.83 1135.19,224.27 1142.43,227.12 1149.49,230.39 1156.35,234.06 1150.55,244.02 1144.29,240.67 1137.84,237.69 1131.23,235.08 1124.48,232.86 1117.61,231.03 1110.64,229.6 1103.6,228.57 1096.51,227.96 1089.4,227.75"/>
<path class="d" d="M1121,224h3v3h-3z"/><path class="w" d="M1122,225h1v1h-1z"/>
<text class="l" transform="translate(1123.54 218.05) rotate(15)">61123</text>
<polygon class="b" points="1156.35,234.06 1162.98,238.12 1169.36,242.56 1175.47,247.35 1181.28,252.49 1186.79,257.96 1191.97,263.74 1196.8,269.81 1201.27,276.14 1205.36,282.72 1195.32,288.48 1191.59,282.46 1187.5,276.68 1183.09,271.14 1178.36,265.86 1173.33,260.86 1168.02,256.17 1162.44,251.78 1156.61,247.73 1150.55,244.02"/>
<path class="d" d="M1178,257h3v3h-3z"/><path class="w" d="M1179,258h1v1h-1z"/>
<text class="l" transform="translate(1184.75 252.83) rotate(45)">61123</text>
<polygon class="b" points="1205.36,282.72 1209.05,289.53 1212.34,296.54 1215.22,303.73 1217.67,311.07 1219.67,318.54 1221.23,326.11 1222.35,333.77 1223.03,341.47 1223.25,349.2 1211.71,349.2 1211.5,342.14 1210.88,335.1 1209.85,328.11 1208.41,321.19 1206.57,314.37 1204.33,307.66 1201.7,301.1 1198.7,294.69 1195.32,288.48"/>
<path class="d" d="M1211,314h3v3h-3z"/><path class="w" d="M1212,315h1v1h-1z"/>
<text class="l" transform="translate(1219.87 313.24) rotate(75)">61123</text>
<polygon class="b" points="1211.71,349.2 1211.71,371.8 1223.25,371.8 1223.25,349.2"/>
<path class="d" d="M1215,359h3v3h-3z"/><path class="w" d="M1216,360h1v1h-1z"/>
<text class="l" transform="translate(1224.4 359.29) rotate(90)">112</text>
<polygon class="b" points="1211.71,371.8 1211.71,394.4 1223.25,394.4 1223.25,371.8"/>
<path class="d" d="M1215,381h3v3h-3z"/><path class="w" d="M1216,382h1v1h-1z"/>
<text class="l" transform="translate(1224.4 381.89) rotate(90)">112</text>
<polygon class="b" points="1211.71,394.4 1211.71,448.35 1223.25,448.35 1223.25,394.4"/>
<path class="d" d="M1215,419h3v3h-3z"/><path class="w" d="M1216,420h1v1h-1z"/>
<text class="l" transform="translate(1210.55 422.57) rotate(270)">61111</text>
<polygon class="b" points="1211.71,448.35 1211.71,502.3 1223.25,502.3 1223.25,448.35"/>
<path class="d" d="M1215,473h3v3h-3z"/><path class="w" d="M1216,474h1v1h-1z"/>
<text class="l" transform="translate(1210.55 476.52) rotate(270)">61111</text>
<polygon class="b" points="1223.25,502.3 1223.03,510.03 1222.35,517.73 1221.23,525.39 1219.67,532.96 1217.67,540.43 1215.22,547.77 1212.34,554.96 1209.05,561.97 1205.36,568.78 1195.32,563.02 1198.7,556.81 1201.7,550.4 1204.33,543.84 1206.57,537.13 1208.41,530.31 1209.85,523.39 1210.88,516.4 1211.5,509.36 1211.71,502.3"/>
<path class="d" d="M1211,533h3v3h-3z"/><path class="w" d="M1212,534h1v1h-1z"/>
<text class="l" transform="translate(1205.75 534.5) rotate(285)">61123</text>
<polygon class="b" points="1205.36,568.78 1201.27,575.36 1196.8,581.69 1191.97,587.76 1186.79,593.54 1181.28,599.01 1175.47,604.15 1169.36,608.94 1162.98,613.38 1156.35,617.44 1150.55,607.48 1156.61,603.77 1162.44,599.72 1168.02,595.33 1173.33,590.64 1178.36,585.64 1183.09,580.36 1187.5,574.82 1191.59,569.04 1195.32,563.02"/>
<path class="d" d="M1178,590h3v3h-3z"/><path class="w" d="M1179,591h1v1h-1z"/>
<text class="l" transform="translate(1173.5 587.51) rotate(315)">61123</text>
<polygon class="b" points="1156.35,617.44 1149.49,621.11 1142.43,624.38 1135.19,627.23 1127.8,629.67 1120.28,631.67 1112.65,633.23 1104.94,634.35 1097.19,635.03 1089.4,635.25 1089.4,623.75 1096.51,623.54 1103.6,622.93 1110.64,621.9 1117.61,620.47 1124.48,618.64 1131.23,616.42 1137.84,613.81 1144.29,610.83 1150.55,607.48"/>
<path class="d" d="M1121,623h3v3h-3z"/><path class="w" d="M1122,624h1v1h-1z"/>
<text class="l" transform="translate(1119.23 617.5) rotate(345)">61123</text>
<polygon class="b" points="240.2,216.25 232.43,216.47 224.68,217.15 216.99,218.27 209.37,219.83 201.86,221.83 194.48,224.26 187.25,227.11 180.2,230.38 173.36,234.04 179.14,243.99 185.39,240.64 191.83,237.66 198.43,235.06 205.18,232.84 212.04,231.01 218.99,229.59 226.02,228.56 233.1,227.95 240.2,227.74"/>
<path class="d" d="M205,224h3v3h-3z"/><path class="w" d="M206,225h1v1h-1z"/>
<text class="l" transform="translate(203.78 218.67) rotate(345)">61123</text>
<polygon class="b" points="173.36,234.04 166.74,238.09 160.37,242.52 154.27,247.31 148.46,252.45 142.96,257.91 137.79,263.67 132.97,269.73 128.51,276.06 124.43,282.63 134.44,288.37 138.17,282.37 142.25,276.59 146.65,271.06 151.38,265.79 156.4,260.8 161.71,256.11 167.28,251.74 173.1,247.69 179.14,243.99"/>
<path class="d" d="M148,257h3v3h-3z"/><path class="w" d="M149,258h1v1h-1z"/>
<text class="l" transform="translate(143.29 254.47) rotate(315)">61123</text>
<polygon class="b" points="124.43,282.63 120.74,289.42 117.45,296.42 114.58,303.6 112.13,310.93 110.13,318.39 108.57,325.95 107.45,333.59 106.77,341.28 106.55,349 118.08,349 118.29,341.95 118.91,334.92 119.94,327.94 121.38,321.04 123.21,314.22 125.45,307.53 128.07,300.97 131.07,294.58 134.44,288.37"/>
<path class="d" d="M115,314h3v3h-3z"/><path class="w" d="M116,315h1v1h-1z"/>
<text class="l" transform="translate(109.31 315.41) rotate(285)">61123</text>
<polygon class="b" points="106.55,349 106.55,407 118.08,407 118.08,349"/>
<path class="d" d="M110,376h3v3h-3z"/><path class="w" d="M111,377h1v1h-1z"/>
<text class="l" transform="translate(119.24 376.81) rotate(90)">61110</text>
<polygon class="b" points="106.55,407 106.55,465.7 118.08,465.7 118.08,407"/>
<path class="d" d="M110,434h3v3h-3z"/><path class="w" d="M111,435h1v1h-1z"/>
<text class="l" transform="translate(119.24 435.15) rotate(90)">61110</text>
<polygon class="b" points="106.55,465.7 106.77,473.44 107.45,481.15 108.57,488.81 110.13,496.39 112.13,503.86 114.58,511.21 117.45,518.4 120.74,525.42 124.43,532.23 134.44,526.47 131.07,520.25 128.07,513.84 125.45,507.27 123.21,500.56 121.38,493.73 119.94,486.81 118.91,479.81 118.29,472.77 118.08,465.7"/>
<path class="d" d="M115,497h3v3h-3z"/><path class="w" d="M116,498h1v1h-1z"/>
<text class="l" transform="translate(123.4 495.6) rotate(75)">61123</text>
<polygon class="b" points="124.43,532.23 128.51,538.82 132.97,545.16 137.79,551.23 142.96,557.01 148.46,562.48 154.27,567.63 160.37,572.43 166.74,576.87 173.36,580.93 179.14,570.96 173.1,567.25 167.28,563.19 161.71,558.81 156.4,554.11 151.38,549.11 146.65,543.83 142.25,538.28 138.17,532.49 134.44,526.47"/>
<path class="d" d="M148,554h3v3h-3z"/><path class="w" d="M149,555h1v1h-1z"/>
<text class="l" transform="translate(154.52 549.28) rotate(45)">61123</text>
<polygon class="b" points="173.36,580.93 180.2,584.6 187.25,587.88 194.48,590.73 201.86,593.17 209.37,595.17 216.99,596.73 224.68,597.85 232.43,598.53 240.2,598.75 240.2,587.24 233.1,587.04 226.02,586.42 218.99,585.4 212.04,583.97 205.18,582.14 198.43,579.91 191.83,577.3 185.39,574.31 179.14,570.96"/>
<path class="d" d="M205,587h3v3h-3z"/><path class="w" d="M206,588h1v1h-1z"/>
<text class="l" transform="translate(208.08 580.37) rotate(15)">61123</text>
<polygon class="b" points="240.2,598.75 262.43,598.75 262.43,587.24 240.2,587.24"/>
<path class="d" d="M249,591h3v3h-3z"/><path class="w" d="M250,592h1v1h-1z"/>
<text class="l" x="250.13" y="584.69">112</text>
<polygon class="b" points="262.43,598.75 291.5,598.75 291.5,587.24 262.43,587.24"/>
<path class="d" d="M275,591h3v3h-3z"/><path class="w" d="M276,592h1v1h-1z"/>
<text class="l" x="275.78" y="584.69">113</text>
<polygon class="b" points="291.5,254.25 350.02,254.25 350.02,242.75 291.5,242.75"/>
<path class="d" d="M319,247h3v3h-3z"/><path class="w" d="M320,248h1v1h-1z"/>
<text class="l" x="319.56" y="240.2">61110</text>
<polygon class="b" points="350.02,254.25 408.54,254.25 408.54,242.75 350.02,242.75"/>
<path class="d" d="M377,247h3v3h-3z"/><path class="w" d="M378,248h1v1h-1z"/>
<text class="l" x="378.08" y="240.2">61110</text>
<polygon class="b" points="408.54,254.25 467.06,254.25 467.06,242.75 408.54,242.75"/>
<path class="d" d="M436,247h3v3h-3z"/><path class="w" d="M437,248h1v1h-1z"/>
<text class="l" x="436.6" y="240.2">61110</text>
<polygon class="b" points="467.06,254.25 525.58,254.25 525.58,242.75 467.06,242.75"/>
<path class="d" d="M494,247h3v3h-3z"/><path class="w" d="M495,248h1v1h-1z"/>
<text class="l" x="495.12" y="240.2">61110</text>
<polygon class="b" points="525.58,254.25 584.1,254.25 584.1,242.75 525.58,242.75"/>
<path class="d" d="M553,247h3v3h-3z"/><path class="w" d="M554,248h1v1h-1z"/>
<text class="l" x="553.64" y="240.2">61110</text>
<polygon class="b" points="584.1,254.25 642.62,254.25 642.62,242.75 584.1,242.75"/>
<path class="d" d="M611,247h3v3h-3z"/><path class="w" d="M612,248h1v1h-1z"/>
<text class="l" x="612.16" y="240.2">61110</text>
<polygon class="b" points="642.62,254.25 701.14,254.25 701.14,242.75 642.62,242.75"/>
<path class="d" d="M670,247h3v3h-3z"/><path class="w" d="M671,248h1v1h-1z"/>
<text class="l" x="670.68" y="240.2">61110</text>
<polygon class="b" points="701.14,254.25 759.66,254.25 759.66,242.75 701.14,242.75"/>
<path class="d" d="M728,247h3v3h-3z"/><path class="w" d="M729,248h1v1h-1z"/>
<text class="l" x="729.2" y="240.2">61110</text>
<polygon class="b" points="759.66,254.25 818.18,254.25 818.18,242.75 759.66,242.75"/>
<path class="d" d="M787,247h3v3h-3z"/><path class="w" d="M788,248h1v1h-1z"/>
<text class="l" x="787.72" y="240.2">61110</text>
<polygon class="b" points="818.18,252.45 876.57,252.45 876.57,240.95 818.18,240.95"/>
<path class="d" d="M845,245h3v3h-3z"/><path class="w" d="M846,246h1v1h-1z"/>
<text class="l" x="846.18" y="238.4">61110</text>
<polygon class="b" points="876.57,252.45 930.58,252.45 930.58,240.95 876.57,240.95"/>
<path class="d" d="M902,245h3v3h-3z"/><path class="w" d="M903,246h1v1h-1z"/>
<text class="l" x="902.38" y="238.4">61111</text>
<polygon class="b" points="930.58,252.45 984.59,252.45 984.59,240.95 930.58,240.95"/>
<path class="d" d="M956,245h3v3h-3z"/><path class="w" d="M957,246h1v1h-1z"/>
<text class="l" x="956.39" y="238.4">61111</text>
<polygon class="b" points="984.59,252.45 1038.6,252.45 1038.6,240.95 984.59,240.95"/>
<path class="d" d="M1010,245h3v3h-3z"/><path class="w" d="M1011,246h1v1h-1z"/>
<text class="l" x="1010.4" y="238.4">61111</text>
<polygon class="b" points="1038.6,240.95 1047.64,241.21 1056.66,242 1065.61,243.31 1074.47,245.14 1083.22,247.47 1091.8,250.32 1100.21,253.65 1108.42,257.47 1116.38,261.76 1110.62,271.72 1103.25,267.75 1095.65,264.21 1087.86,261.12 1079.91,258.49 1071.82,256.33 1063.61,254.63 1055.32,253.42 1046.98,252.69 1038.6,252.45"/>
<path class="d" d="M1075,250h3v3h-3z"/><path class="w" d="M1076,251h1v1h-1z"/>
<text class="l" transform="translate(1078.35 243.51) rotate(15)">61124</text>
<polygon class="b" points="1116.38,261.76 1124.08,266.5 1131.49,271.68 1138.59,277.28 1145.35,283.29 1151.75,289.68 1157.77,296.42 1163.38,303.51 1168.57,310.91 1173.32,318.6 1163.34,324.35 1158.94,317.23 1154.14,310.38 1148.94,303.82 1143.37,297.57 1137.45,291.65 1131.19,286.09 1124.61,280.9 1117.75,276.11 1110.62,271.72"/>
<path class="d" d="M1143,289h3v3h-3z"/><path class="w" d="M1144,290h1v1h-1z"/>
<text class="l" transform="translate(1149.26 284.07) rotate(45)">61124</text>
<polygon class="b" points="1173.32,318.6 1177.61,326.55 1181.44,334.74 1184.78,343.13 1187.62,351.71 1189.96,360.43 1191.79,369.28 1193.1,378.22 1193.89,387.22 1194.15,396.25 1182.64,396.25 1182.4,387.89 1181.67,379.55 1180.45,371.28 1178.76,363.09 1176.59,355.01 1173.95,347.07 1170.86,339.29 1167.32,331.71 1163.34,324.35"/>
<path class="d" d="M1181,356h3v3h-3z"/><path class="w" d="M1182,357h1v1h-1z"/>
<text class="l" transform="translate(1190.01 354.5) rotate(75)">61124</text>
<polygon class="b" points="1182.64,396.25 1182.64,454.77 1194.15,454.77 1194.15,396.25"/>
<path class="d" d="M1186,424h3v3h-3z"/><path class="w" d="M1187,425h1v1h-1z"/>
<text class="l" transform="translate(1195.3 424.31) rotate(90)">61110</text>
<polygon class="b" points="1194.15,454.77 1193.89,463.8 1193.1,472.8 1191.79,481.74 1189.96,490.58 1187.62,499.31 1184.78,507.88 1181.44,516.28 1177.61,524.47 1173.32,532.42 1163.34,526.67 1167.32,519.3 1170.86,511.72 1173.95,503.95 1176.59,496.01 1178.76,487.93 1180.45,479.74 1181.67,471.46 1182.4,463.13 1182.64,454.77"/>
<path class="d" d="M1181,491h3v3h-3z"/><path class="w" d="M1182,492h1v1h-1z"/>
<text class="l" transform="translate(1175.96 492.75) rotate(285)">61124</text>
<polygon class="b" points="1173.32,532.42 1168.57,540.11 1163.38,547.51 1157.77,554.59 1151.75,561.34 1145.35,567.73 1138.59,573.73 1131.49,579.34 1124.08,584.52 1116.38,589.26 1110.62,579.3 1117.75,574.91 1124.61,570.11 1131.19,564.92 1137.45,559.36 1143.37,553.45 1148.94,547.2 1154.14,540.64 1158.94,533.79 1163.34,526.67"/>
<path class="d" d="M1143,559h3v3h-3z"/><path class="w" d="M1144,560h1v1h-1z"/>
<text class="l" transform="translate(1138.09 555.78) rotate(315)">61124</text>
<polygon class="b" points="1116.38,589.26 1108.42,593.55 1100.21,597.36 1091.8,600.7 1083.22,603.54 1074.47,605.88 1065.61,607.71 1056.66,609.02 1047.64,609.8 1038.6,610.07 1038.6,598.57 1046.98,598.32 1055.32,597.59 1063.61,596.38 1071.82,594.69 1079.91,592.52 1087.86,589.89 1095.65,586.81 1103.25,583.27 1110.62,579.3"/>
<path class="d" d="M1075,597h3v3h-3z"/><path class="w" d="M1076,598h1v1h-1z"/>
<text class="l" transform="translate(1074.07 591.56) rotate(345)">61124</text>
<polygon class="b" points="291.5,242.75 282.47,243.01 273.47,243.8 264.53,245.11 255.69,246.94 246.96,249.27 238.39,252.11 229.99,255.45 221.8,259.27 213.85,263.55 219.6,273.51 226.96,269.54 234.54,266 242.32,262.92 250.26,260.29 258.34,258.12 266.53,256.43 274.81,255.22 283.14,254.49 291.5,254.25"/>
<path class="d" d="M251,252h3v3h-3z"/><path class="w" d="M252,253h1v1h-1z"/>
<text class="l" transform="translate(249.5 245.94) rotate(345)">61124</text>
<polygon class="b" points="213.85,263.55 206.16,268.29 198.76,273.47 191.68,279.07 184.93,285.08 178.54,291.46 172.53,298.21 166.93,305.29 161.75,312.69 157.01,320.38 166.97,326.12 171.36,319.01 176.16,312.16 181.34,305.6 186.91,299.35 192.82,293.44 199.07,287.88 205.63,282.69 212.48,277.9 219.6,273.51"/>
<path class="d" d="M184,290h3v3h-3z"/><path class="w" d="M185,291h1v1h-1z"/>
<text class="l" transform="translate(179.33 287.56) rotate(315)">61124</text>
<polygon class="b" points="157.01,320.38 152.72,328.32 148.9,336.51 145.57,344.9 142.73,353.47 140.39,362.2 138.56,371.04 137.25,379.98 136.46,388.97 136.2,398 147.7,398 147.95,389.64 148.67,381.31 149.89,373.04 151.58,364.85 153.74,356.77 156.37,348.83 159.46,341.06 163,333.48 166.97,326.12"/>
<path class="d" d="M145,357h3v3h-3z"/><path class="w" d="M146,358h1v1h-1z"/>
<text class="l" transform="translate(139.72 358.59) rotate(285)">61124</text>
<polygon class="b" points="136.2,398 136.2,420.9 147.7,420.9 147.7,398"/>
<path class="d" d="M140,407h3v3h-3z"/><path class="w" d="M141,408h1v1h-1z"/>
<text class="l" transform="translate(135.05 410.68) rotate(270)">112</text>
<polygon class="b" points="136.2,420.9 136.46,429.94 137.25,438.95 138.56,447.89 140.39,456.75 142.73,465.49 145.57,474.07 148.9,482.47 152.72,490.67 157.01,498.63 166.97,492.87 163,485.5 159.46,477.91 156.37,470.13 153.74,462.18 151.58,454.1 149.89,445.9 148.67,437.61 147.95,429.27 147.7,420.9"/>
<path class="d" d="M145,458h3v3h-3z"/><path class="w" d="M146,459h1v1h-1z"/>
<text class="l" transform="translate(153.75 456.6) rotate(75)">61124</text>
<polygon class="b" points="157.01,498.63 161.75,506.32 166.93,513.73 172.53,520.83 178.54,527.58 184.93,533.97 191.68,539.99 198.76,545.59 206.16,550.78 213.85,555.53 219.6,545.56 212.48,541.16 205.63,536.36 199.07,531.17 192.82,525.6 186.91,519.68 181.34,513.43 176.16,506.86 171.36,500 166.97,492.87"/>
<path class="d" d="M184,525h3v3h-3z"/><path class="w" d="M185,526h1v1h-1z"/>
<text class="l" transform="translate(190.48 520.32) rotate(45)">61124</text>
<polygon class="b" points="213.85,555.53 221.8,559.82 229.99,563.64 238.39,566.98 246.96,569.83 255.69,572.16 264.53,573.99 273.47,575.3 282.47,576.09 291.5,576.35 291.5,564.84 283.14,564.6 274.81,563.87 266.53,562.66 258.34,560.96 250.26,558.8 242.32,556.16 234.54,553.07 226.96,549.53 219.6,545.56"/>
<path class="d" d="M251,563h3v3h-3z"/><path class="w" d="M252,564h1v1h-1z"/>
<text class="l" transform="translate(253.77 557.21) rotate(15)">61124</text>
<polygon class="b" points="291.5,299.75 345.63,299.75 345.63,288.25 291.5,288.25"/>
<path class="d" d="M317,292h3v3h-3z"/><path class="w" d="M318,293h1v1h-1z"/>
<text class="l" x="317.37" y="285.7">61111</text>
<polygon class="b" points="345.63,299.75 399.76,299.75 399.76,288.25 345.63,288.25"/>
<path class="d" d="M371,292h3v3h-3z"/><path class="w" d="M372,293h1v1h-1z"/>
<text class="l" x="371.5" y="285.7">61111</text>
<polygon class="b" points="399.76,299.75 458.29,299.75 458.29,288.25 399.76,288.25"/>
<path class="d" d="M427,292h3v3h-3z"/><path class="w" d="M428,293h1v1h-1z"/>
<text class="l" x="427.83" y="285.7">61110</text>
<polygon class="b" points="458.29,299.75 516.81,299.75 516.81,288.25 458.29,288.25"/>
<path class="d" d="M486,292h3v3h-3z"/><path class="w" d="M487,293h1v1h-1z"/>
<text class="l" x="486.35" y="285.7">61110</text>
<polygon class="b" points="516.81,299.75 575.33,299.75 575.33,288.25 516.81,288.25"/>
<path class="d" d="M544,292h3v3h-3z"/><path class="w" d="M545,293h1v1h-1z"/>
<text class="l" x="544.87" y="285.7">61110</text>
<polygon class="b" points="575.33,299.75 633.85,299.75 633.85,288.25 575.33,288.25"/>
<path class="d" d="M603,292h3v3h-3z"/><path class="w" d="M604,293h1v1h-1z"/>
<text class="l" x="603.39" y="285.7">61110</text>
<polygon class="b" points="633.85,299.75 692.37,299.75 692.37,288.25 633.85,288.25"/>
<path class="d" d="M661,292h3v3h-3z"/><path class="w" d="M662,293h1v1h-1z"/>
<text class="l" x="661.91" y="285.7">61110</text>
<polygon class="b" points="692.37,299.75 750.89,299.75 750.89,288.25 692.37,288.25"/>
<path class="d" d="M720,292h3v3h-3z"/><path class="w" d="M721,293h1v1h-1z"/>
<text class="l" x="720.43" y="285.7">61110</text>
<polygon class="b" points="750.89,299.75 809.41,299.75 809.41,288.25 750.89,288.25"/>
<path class="d" d="M778,292h3v3h-3z"/><path class="w" d="M779,293h1v1h-1z"/>
<text class="l" x="778.95" y="285.7">61110</text>
<polygon class="b" points="809.41,299.75 867.94,299.75 867.94,288.25 809.41,288.25"/>
<path class="d" d="M837,292h3v3h-3z"/><path class="w" d="M838,293h1v1h-1z"/>
<text class="l" x="837.48" y="285.7">61110</text>
<polygon class="b" points="867.94,299.75 926.46,299.75 926.46,288.25 867.94,288.25"/>
<path class="d" d="M895,292h3v3h-3z"/><path class="w" d="M896,293h1v1h-1z"/>
<text class="l" x="896" y="285.7">61110</text>
<polygon class="b" points="926.46,299.75 984.98,299.75 984.98,288.25 926.46,288.25"/>
<path class="d" d="M954,292h3v3h-3z"/><path class="w" d="M955,293h1v1h-1z"/>
<text class="l" x="954.52" y="285.7">61110</text>
<polygon class="b" points="984.98,299.75 1043.5,299.75 1043.5,288.25 984.98,288.25"/>
<path class="d" d="M1012,292h3v3h-3z"/><path class="w" d="M1013,293h1v1h-1z"/>
<text class="l" x="1013.04" y="285.7">61110</text>
<polygon class="b" points="1043.5,288.25 1051.19,288.47 1058.85,289.15 1066.46,290.27 1073.99,291.83 1081.42,293.83 1088.72,296.26 1095.87,299.12 1102.84,302.38 1109.61,306.05 1103.89,316.01 1097.71,312.66 1091.34,309.67 1084.81,307.07 1078.14,304.85 1071.35,303.02 1064.47,301.59 1057.52,300.57 1050.52,299.95 1043.5,299.75"/>
<path class="d" d="M1074,296h3v3h-3z"/><path class="w" d="M1075,297h1v1h-1z"/>
<text class="l" transform="translate(1077.21 290.05) rotate(15)">61123</text>
<polygon class="b" points="1109.61,306.05 1116.16,310.11 1122.46,314.54 1128.49,319.33 1134.24,324.47 1139.67,329.93 1144.79,335.71 1149.56,341.77 1153.97,348.1 1158.01,354.68 1148.1,360.42 1144.41,354.42 1140.38,348.63 1136.02,343.1 1131.35,337.82 1126.38,332.83 1121.14,328.14 1115.62,323.76 1109.87,319.71 1103.89,316.01"/>
<path class="d" d="M1131,329h3v3h-3z"/><path class="w" d="M1132,330h1v1h-1z"/>
<text class="l" transform="translate(1137.66 324.8) rotate(45)">61123</text>
<polygon class="b" points="1158.01,354.68 1161.66,361.48 1164.91,368.48 1167.75,375.66 1170.17,383 1172.17,390.46 1173.73,398.03 1174.85,405.68 1175.53,413.38 1175.75,421.1 1164.28,421.1 1164.07,414.04 1163.46,407.01 1162.44,400.03 1161.02,393.11 1159.2,386.3 1156.99,379.6 1154.4,373.04 1151.43,366.64 1148.1,360.42"/>
<path class="d" d="M1164,386h3v3h-3z"/><path class="w" d="M1165,387h1v1h-1z"/>
<text class="l" transform="translate(1172.37 385.17) rotate(75)">61123</text>
<polygon class="b" points="1175.75,421.1 1175.53,428.81 1174.85,436.5 1173.73,444.13 1172.17,451.69 1170.17,459.14 1167.75,466.47 1164.91,473.64 1161.66,480.63 1158.01,487.42 1148.1,481.68 1151.43,475.48 1154.4,469.09 1156.99,462.54 1159.2,455.85 1161.02,449.04 1162.44,442.14 1163.46,435.17 1164.07,428.14 1164.28,421.1"/>
<path class="d" d="M1164,452h3v3h-3z"/><path class="w" d="M1165,453h1v1h-1z"/>
<text class="l" transform="translate(1158.4 453.22) rotate(285)">61123</text>
<polygon class="b" points="1158.01,487.42 1153.97,493.99 1149.56,500.31 1144.79,506.36 1139.67,512.12 1134.24,517.58 1128.49,522.71 1122.46,527.49 1116.16,531.92 1109.61,535.97 1103.89,526.03 1109.87,522.33 1115.62,518.29 1121.14,513.91 1126.38,509.23 1131.35,504.25 1136.02,498.98 1140.38,493.45 1144.41,487.68 1148.1,481.68"/>
<path class="d" d="M1131,509h3v3h-3z"/><path class="w" d="M1132,510h1v1h-1z"/>
<text class="l" transform="translate(1126.55 506.11) rotate(315)">61123</text>
<polygon class="b" points="1109.61,535.97 1102.84,539.63 1095.87,542.89 1088.72,545.74 1081.42,548.17 1073.99,550.17 1066.46,551.73 1058.85,552.85 1051.19,553.53 1043.5,553.75 1043.5,542.26 1050.52,542.06 1057.52,541.44 1064.47,540.42 1071.35,538.99 1078.14,537.17 1084.81,534.95 1091.34,532.35 1097.71,529.37 1103.89,526.03"/>
<path class="d" d="M1074,542h3v3h-3z"/><path class="w" d="M1075,543h1v1h-1z"/>
<text class="l" transform="translate(1072.96 536.03) rotate(345)">61123</text>
<polygon class="b" points="291.5,288.25 283.77,288.47 276.07,289.15 268.42,290.27 260.85,291.83 253.39,293.83 246.05,296.26 238.87,299.11 231.86,302.38 225.06,306.04 230.81,315.99 237.02,312.64 243.42,309.66 249.98,307.06 256.69,304.84 263.51,303.01 270.42,301.59 277.41,300.56 284.44,299.95 291.5,299.74"/>
<path class="d" d="M257,296h3v3h-3z"/><path class="w" d="M258,297h1v1h-1z"/>
<text class="l" transform="translate(255.3 290.67) rotate(345)">61123</text>
<polygon class="b" points="225.06,306.04 218.48,310.09 212.15,314.52 206.08,319.31 200.31,324.45 194.84,329.91 189.7,335.67 184.91,341.73 180.48,348.06 176.42,354.63 186.38,360.37 190.08,354.37 194.13,348.59 198.51,343.06 203.21,337.79 208.2,332.8 213.48,328.11 219.01,323.74 224.8,319.69 230.81,315.99"/>
<path class="d" d="M200,329h3v3h-3z"/><path class="w" d="M201,330h1v1h-1z"/>
<text class="l" transform="translate(195.17 326.47) rotate(315)">61123</text>
<polygon class="b" points="176.42,354.63 172.75,361.42 169.48,368.42 166.63,375.6 164.2,382.93 162.2,390.39 160.63,397.95 159.51,405.59 158.84,413.28 158.62,421 170.12,421 170.32,413.95 170.94,406.92 171.96,399.94 173.39,393.04 175.21,386.22 177.44,379.53 180.04,372.97 183.03,366.58 186.38,360.37"/>
<path class="d" d="M167,386h3v3h-3z"/><path class="w" d="M168,387h1v1h-1z"/>
<text class="l" transform="translate(161.37 387.41) rotate(285)">61123</text>
<polygon class="b" points="158.62,421 158.84,428.72 159.51,436.41 160.63,444.05 162.2,451.61 164.2,459.07 166.63,466.4 169.48,473.58 172.75,480.58 176.42,487.37 186.38,481.63 183.03,475.42 180.04,469.03 177.44,462.47 175.21,455.78 173.39,448.96 171.96,442.06 170.94,435.08 170.32,428.05 170.12,421"/>
<path class="d" d="M167,452h3v3h-3z"/><path class="w" d="M168,453h1v1h-1z"/>
<text class="l" transform="translate(175.4 450.83) rotate(75)">61123</text>
<polygon class="b" points="176.42,487.37 180.48,493.94 184.91,500.27 189.7,506.33 194.84,512.09 200.31,517.55 206.08,522.69 212.15,527.48 218.48,531.91 225.06,535.96 230.81,526.01 224.8,522.31 219.01,518.26 213.48,513.89 208.2,509.2 203.21,504.21 198.51,498.94 194.13,493.41 190.08,487.63 186.38,481.63"/>
<path class="d" d="M200,509h3v3h-3z"/><path class="w" d="M201,510h1v1h-1z"/>
<text class="l" transform="translate(206.33 504.38) rotate(45)">61123</text>
<polygon class="b" points="225.06,535.96 231.86,539.62 238.87,542.89 246.05,545.74 253.39,548.17 260.85,550.17 268.42,551.73 276.07,552.85 283.77,553.53 291.5,553.75 291.5,542.26 284.44,542.05 277.41,541.44 270.42,540.41 263.51,538.99 256.69,537.16 249.98,534.94 243.42,532.34 237.02,529.36 230.81,526.01"/>
<path class="d" d="M257,542h3v3h-3z"/><path class="w" d="M258,543h1v1h-1z"/>
<text class="l" transform="translate(259.57 535.4) rotate(15)">61123</text>
<g transform="translate(150 634.7) rotate(30.4)" fill="#9c9c9c" stroke="#242424" stroke-width="1.1" stroke-linejoin="miter">
<path d="M-1.3,-11.7 H29.2 V-9.1 H6.3 L1.3,-4.6 V4.6 L6.3,9.1 H29.2 V11.7 H-1.3 Z"/>
<path d="M1.3,-9.1 V9.1 M1.3,-9.1 H6.3 M1.3,9.1 H6.3" fill="none" stroke-width="0.7"/>
</g>
<circle cx="150" cy="634.7" r="1.6" fill="#fff" stroke="#1818c0" stroke-width="1"/>
<g transform="translate(227.4 626) rotate(18)" fill="#9c9c9c" stroke="#242424" stroke-width="1.1" stroke-linejoin="miter">
<path d="M-1.3,-12.4 H29 V-9.8 H6.3 L1.3,-5.3 V5.3 L6.3,9.8 H29 V12.4 H-1.3 Z"/>
<path d="M1.3,-9.8 V9.8 M1.3,-9.8 H6.3 M1.3,9.8 H6.3" fill="none" stroke-width="0.7"/>
</g>
<circle cx="227.4" cy="626" r="1.6" fill="#fff" stroke="#1818c0" stroke-width="1"/>
<polygon class="b" points="291.5,277.73 345.63,277.73 345.63,266.25 291.5,266.25"/>
<path class="d" d="M317,270h3v3h-3z"/><path class="w" d="M318,271h1v1h-1z"/>
<text class="l" x="317.37" y="263.7">61111</text>
<polygon class="b" points="345.63,277.73 399.76,277.73 399.76,266.25 345.63,266.25"/>
<path class="d" d="M371,270h3v3h-3z"/><path class="w" d="M372,271h1v1h-1z"/>
<text class="l" x="371.5" y="263.7">61111</text>
<polygon class="b" points="399.76,277.73 458.29,277.73 458.29,266.25 399.76,266.25"/>
<path class="d" d="M427,270h3v3h-3z"/><path class="w" d="M428,271h1v1h-1z"/>
<text class="l" x="427.83" y="263.7">61110</text>
<polygon class="b" points="458.29,277.73 516.81,277.73 516.81,266.25 458.29,266.25"/>
<path class="d" d="M486,270h3v3h-3z"/><path class="w" d="M487,271h1v1h-1z"/>
<text class="l" x="486.35" y="263.7">61110</text>
<polygon class="b" points="516.81,277.73 575.33,277.73 575.33,266.25 516.81,266.25"/>
<path class="d" d="M544,270h3v3h-3z"/><path class="w" d="M545,271h1v1h-1z"/>
<text class="l" x="544.87" y="263.7">61110</text>
<polygon class="b" points="575.33,277.73 633.85,277.73 633.85,266.25 575.33,266.25"/>
<path class="d" d="M603,270h3v3h-3z"/><path class="w" d="M604,271h1v1h-1z"/>
<text class="l" x="603.39" y="263.7">61110</text>
<polygon class="b" points="633.85,277.73 692.37,277.73 692.37,266.25 633.85,266.25"/>
<path class="d" d="M661,270h3v3h-3z"/><path class="w" d="M662,271h1v1h-1z"/>
<text class="l" x="661.91" y="263.7">61110</text>
<polygon class="b" points="692.37,277.73 750.89,277.73 750.89,266.25 692.37,266.25"/>
<path class="d" d="M720,270h3v3h-3z"/><path class="w" d="M721,271h1v1h-1z"/>
<text class="l" x="720.43" y="263.7">61110</text>
<polygon class="b" points="750.89,277.73 809.41,277.73 809.41,266.25 750.89,266.25"/>
<path class="d" d="M778,270h3v3h-3z"/><path class="w" d="M779,271h1v1h-1z"/>
<text class="l" x="778.95" y="263.7">61110</text>
<polygon class="b" points="809.41,277.73 867.94,277.73 867.94,266.25 809.41,266.25"/>
<path class="d" d="M837,270h3v3h-3z"/><path class="w" d="M838,271h1v1h-1z"/>
<text class="l" x="837.48" y="263.7">61110</text>
<polygon class="b" points="867.94,277.73 926.46,277.73 926.46,266.25 867.94,266.25"/>
<path class="d" d="M895,270h3v3h-3z"/><path class="w" d="M896,271h1v1h-1z"/>
<text class="l" x="896" y="263.7">61110</text>
<polygon class="b" points="926.46,277.73 984.98,277.73 984.98,266.25 926.46,266.25"/>
<path class="d" d="M954,270h3v3h-3z"/><path class="w" d="M955,271h1v1h-1z"/>
<text class="l" x="954.52" y="263.7">61110</text>
<polygon class="b" points="984.98,277.73 1043.5,277.73 1043.5,266.25 984.98,266.25"/>
<path class="d" d="M1012,270h3v3h-3z"/><path class="w" d="M1013,271h1v1h-1z"/>
<text class="l" x="1013.04" y="263.7">61110</text>
<polygon class="b" points="1043.5,266.25 1052.5,266.51 1061.46,267.3 1070.37,268.61 1079.18,270.44 1087.88,272.77 1096.42,275.6 1104.79,278.93 1112.94,282.73 1120.86,287 1115.14,296.92 1107.8,292.97 1100.25,289.45 1092.5,286.37 1084.59,283.75 1076.54,281.59 1068.38,279.91 1060.13,278.7 1051.83,277.97 1043.5,277.73"/>
<path class="d" d="M1080,275h3v3h-3z"/><path class="w" d="M1081,276h1v1h-1z"/>
<text class="l" transform="translate(1083.04 268.81) rotate(15)">61124</text>
<polygon class="b" points="1120.86,287 1128.52,291.73 1135.9,296.89 1142.96,302.47 1149.68,308.45 1156.05,314.82 1162.03,321.54 1167.61,328.6 1172.77,335.98 1177.5,343.64 1167.58,349.36 1163.2,342.27 1158.42,335.44 1153.25,328.91 1147.71,322.68 1141.82,316.79 1135.59,311.25 1129.06,306.08 1122.23,301.3 1115.14,296.92"/>
<path class="d" d="M1147,314h3v3h-3z"/><path class="w" d="M1148,315h1v1h-1z"/>
<text class="l" transform="translate(1153.57 309.24) rotate(45)">61124</text>
<polygon class="b" points="1177.5,343.64 1181.77,351.56 1185.57,359.71 1188.9,368.08 1191.73,376.62 1194.06,385.32 1195.89,394.13 1197.2,403.04 1197.99,412 1198.25,421 1186.77,421 1186.53,412.67 1185.8,404.37 1184.59,396.12 1182.91,387.96 1180.75,379.91 1178.13,372 1175.05,364.25 1171.53,356.7 1167.58,349.36"/>
<path class="d" d="M1185,380h3v3h-3z"/><path class="w" d="M1186,381h1v1h-1z"/>
<text class="l" transform="translate(1194.11 379.41) rotate(75)">61124</text>
<polygon class="b" points="1198.25,421 1197.99,430.03 1197.2,439.04 1195.89,447.98 1194.06,456.83 1191.73,465.56 1188.9,474.13 1185.57,482.53 1181.77,490.72 1177.5,498.68 1167.58,492.92 1171.53,485.56 1175.05,477.98 1178.13,470.2 1180.75,462.26 1182.91,454.17 1184.59,445.98 1185.8,437.7 1186.53,429.36 1186.77,421"/>
<path class="d" d="M1185,458h3v3h-3z"/><path class="w" d="M1186,459h1v1h-1z"/>
<text class="l" transform="translate(1180.12 459) rotate(285)">61124</text>
<polygon class="b" points="1177.5,498.68 1172.77,506.37 1167.61,513.77 1162.03,520.86 1156.05,527.61 1149.68,534 1142.96,540.01 1135.9,545.61 1128.52,550.79 1120.86,555.54 1115.14,545.58 1122.23,541.18 1129.06,536.38 1135.59,531.19 1141.82,525.63 1147.71,519.71 1153.25,513.46 1158.42,506.9 1163.2,500.05 1167.58,492.92"/>
<path class="d" d="M1147,525h3v3h-3z"/><path class="w" d="M1148,526h1v1h-1z"/>
<text class="l" transform="translate(1142.45 522.05) rotate(315)">61124</text>
<polygon class="b" points="1120.86,555.54 1112.94,559.83 1104.79,563.65 1096.42,566.98 1087.88,569.83 1079.18,572.16 1070.37,573.99 1061.46,575.3 1052.5,576.09 1043.5,576.35 1043.5,564.85 1051.83,564.6 1060.13,563.88 1068.38,562.66 1076.54,560.97 1084.59,558.8 1092.5,556.17 1100.25,553.08 1107.8,549.55 1115.14,545.58"/>
<path class="d" d="M1080,564h3v3h-3z"/><path class="w" d="M1081,565h1v1h-1z"/>
<text class="l" transform="translate(1078.78 557.84) rotate(345)">61124</text>
<polygon class="b" points="292.2,266.25 284.41,266.47 276.64,267.15 268.93,268.27 261.3,269.83 253.77,271.83 246.37,274.24 239.13,277.07 232.06,280.31 225.2,283.95 231,293.82 237.27,290.49 243.72,287.54 250.34,284.95 257.09,282.75 263.97,280.94 270.95,279.53 277.99,278.51 285.08,277.9 292.2,277.7"/>
<path class="d" d="M257,274h3v3h-3z"/><path class="w" d="M258,275h1v1h-1z"/>
<text class="l" transform="translate(255.7 268.67) rotate(345)">61123</text>
<polygon class="b" points="225.2,283.95 218.57,287.97 212.18,292.36 206.07,297.11 200.24,302.21 194.73,307.62 189.55,313.35 184.72,319.36 180.25,325.63 176.15,332.15 186.2,337.85 189.93,331.89 194.02,326.16 198.43,320.67 203.17,315.44 208.2,310.5 213.52,305.84 219.11,301.5 224.94,297.49 231,293.82"/>
<path class="d" d="M200,307h3v3h-3z"/><path class="w" d="M201,308h1v1h-1z"/>
<text class="l" transform="translate(195.07 304.22) rotate(315)">61123</text>
<polygon class="b" points="176.15,332.15 172.45,338.89 169.16,345.84 166.28,352.96 163.83,360.23 161.83,367.63 160.27,375.13 159.15,382.71 158.47,390.34 158.25,398 169.8,398 170.01,391.01 170.63,384.03 171.66,377.11 173.1,370.26 174.94,363.5 177.18,356.85 179.81,350.35 182.82,344.01 186.2,337.85"/>
<path class="d" d="M166,363h3v3h-3z"/><path class="w" d="M167,364h1v1h-1z"/>
<text class="l" transform="translate(161.01 364.67) rotate(285)">61123</text>
<polygon class="b" points="158.25,398 158.25,456.6 169.8,456.6 169.8,398"/>
<path class="d" d="M162,425h3v3h-3z"/><path class="w" d="M163,426h1v1h-1z"/>
<text class="l" transform="translate(170.96 426.1) rotate(90)">61110</text>
<polygon class="b" points="158.25,456.6 158.25,515.4 169.8,515.4 169.8,456.6"/>
<path class="d" d="M162,484h3v3h-3z"/><path class="w" d="M163,485h1v1h-1z"/>
<text class="l" transform="translate(170.96 484.79) rotate(90)">61110</text>
<polygon class="b" points="158.25,515.4 158.47,523.05 159.15,530.68 160.27,538.25 161.83,545.75 163.83,553.14 166.28,560.41 169.16,567.52 172.45,574.46 176.15,581.2 186.2,575.5 182.82,569.35 179.81,563.01 177.18,556.51 174.94,549.88 173.1,543.12 171.66,536.27 170.63,529.36 170.01,522.39 169.8,515.4"/>
<path class="d" d="M166,546h3v3h-3z"/><path class="w" d="M167,547h1v1h-1z"/>
<text class="l" transform="translate(175.13 544.98) rotate(75)">61123</text>
<polygon class="b" points="176.15,581.2 180.25,587.71 184.72,593.98 189.55,599.99 194.73,605.71 200.24,611.12 206.07,616.21 212.18,620.95 218.57,625.35 225.2,629.36 231,619.5 224.94,615.83 219.11,611.82 213.52,607.48 208.2,602.83 203.17,597.89 198.43,592.67 194.02,587.18 189.93,581.45 186.2,575.5"/>
<path class="d" d="M200,602h3v3h-3z"/><path class="w" d="M201,603h1v1h-1z"/>
<text class="l" transform="translate(206.32 598.06) rotate(45)">61123</text>
<polygon class="b" points="225.2,629.36 232.06,633 239.13,636.23 246.37,639.06 253.77,641.47 261.3,643.47 268.93,645.03 276.64,646.15 284.41,646.83 292.2,647.05 292.2,635.61 285.08,635.4 277.99,634.79 270.95,633.78 263.97,632.37 257.09,630.56 250.34,628.36 243.72,625.77 237.27,622.82 231,619.5"/>
<path class="d" d="M257,635h3v3h-3z"/><path class="w" d="M258,636h1v1h-1z"/>
<text class="l" transform="translate(260 628.81) rotate(15)">61123</text>
<polygon class="b" points="292.2,647.05 346.33,647.05 346.33,635.61 292.2,635.61"/>
<path class="d" d="M317,639h3v3h-3z"/><path class="w" d="M318,640h1v1h-1z"/>
<text class="l" x="318.07" y="633.08">61111</text>
<polygon class="b" points="104.23,538.87 104.46,546.59 105.13,554.29 106.25,561.94 107.82,569.51 109.82,576.98 112.25,584.31 115.1,591.5 118.37,598.5 122.04,605.31 132,599.56 128.65,593.34 125.66,586.94 123.05,580.38 120.83,573.68 119.01,566.86 117.58,559.94 116.56,552.96 115.94,545.92 115.73,538.87"/>
<path class="d" d="M112,570h3v3h-3z"/><path class="w" d="M113,571h1v1h-1z"/>
<text class="l" transform="translate(121.02 568.73) rotate(75)">61123</text>
<polygon class="b" points="122.04,605.31 126.1,611.89 130.53,618.22 135.32,624.28 140.46,630.06 145.93,635.52 151.7,640.66 157.77,645.46 164.1,649.89 170.68,653.95 176.43,643.99 170.42,640.28 164.63,636.23 159.09,631.85 153.82,627.16 148.83,622.16 144.13,616.89 139.75,611.35 135.7,605.57 132,599.56"/>
<path class="d" d="M145,627h3v3h-3z"/><path class="w" d="M146,628h1v1h-1z"/>
<text class="l" transform="translate(151.95 622.34) rotate(45)">61123</text>
<polygon class="b" points="170.68,653.95 177.48,657.62 184.49,660.88 191.67,663.74 199.01,666.17 206.47,668.17 214.04,669.73 221.69,670.85 229.39,671.53 237.12,671.75 237.12,660.25 230.06,660.04 223.03,659.43 216.04,658.41 209.13,656.98 202.31,655.15 195.6,652.93 189.04,650.32 182.64,647.34 176.43,643.99"/>
<path class="d" d="M202,660h3v3h-3z"/><path class="w" d="M203,661h1v1h-1z"/>
<text class="l" transform="translate(205.19 653.39) rotate(15)">61123</text>
<polygon class="b" points="237.12,671.75 291.25,671.75 291.25,660.25 237.12,660.25"/>
<path class="d" d="M262,664h3v3h-3z"/><path class="w" d="M263,665h1v1h-1z"/>
<text class="l" x="262.98" y="657.7">61111</text>
<polygon class="b" points="291.25,671.75 345.38,671.75 345.38,660.25 291.25,660.25"/>
<path class="d" d="M316,664h3v3h-3z"/><path class="w" d="M317,665h1v1h-1z"/>
<text class="l" x="317.12" y="657.7">61111</text>
<polygon class="b" points="291.5,553.75 345.63,553.75 345.63,542.25 291.5,542.25"/>
<polyline class="y" points="291.5,548 345.63,548"/>
<path class="d" d="M317,546h3v3h-3z"/><path class="w" d="M318,547h1v1h-1z"/>
<text class="l" x="317.37" y="539.7">61111</text>
<polygon class="b" points="350.06,564.51 404.12,542.11 399.72,531.49 345.66,553.89"/>
<polygon class="b" points="345.63,553.75 404.15,553.75 404.15,542.25 345.63,542.25"/>
<polyline class="y" points="347.86,559.2 401.92,536.8"/>
<polyline class="y" points="345.63,548 404.15,548"/>
<path class="d" d="M373,546h3v3h-3z"/><path class="w" d="M374,547h1v1h-1z"/>
<text class="l" x="373.69" y="539.7">61164</text>
<polygon class="b" points="404.15,553.75 462.67,553.75 462.67,542.25 404.15,542.25"/>
<polyline class="y" points="404.15,548 462.67,548"/>
<path class="d" d="M431,546h3v3h-3z"/><path class="w" d="M432,547h1v1h-1z"/>
<text class="l" x="432.21" y="539.7">61110</text>
<polygon class="b" points="462.67,553.75 521.19,553.75 521.19,542.25 462.67,542.25"/>
<polyline class="y" points="462.67,548 521.19,548"/>
<path class="d" d="M490,546h3v3h-3z"/><path class="w" d="M491,547h1v1h-1z"/>
<text class="l" x="490.73" y="539.7">61110</text>
<polygon class="b" points="521.19,553.75 579.71,553.75 579.71,542.25 521.19,542.25"/>
<polyline class="y" points="521.19,548 579.71,548"/>
<path class="d" d="M548,546h3v3h-3z"/><path class="w" d="M549,547h1v1h-1z"/>
<text class="l" x="549.25" y="539.7">61110</text>
<polygon class="b" points="579.71,553.75 638.23,553.75 638.23,542.25 579.71,542.25"/>
<polyline class="y" points="579.71,548 638.23,548"/>
<path class="d" d="M607,546h3v3h-3z"/><path class="w" d="M608,547h1v1h-1z"/>
<text class="l" x="607.77" y="539.7">61110</text>
<polygon class="b" points="638.23,553.75 696.75,553.75 696.75,542.25 638.23,542.25"/>
<polyline class="y" points="638.23,548 696.75,548"/>
<path class="d" d="M665,546h3v3h-3z"/><path class="w" d="M666,547h1v1h-1z"/>
<text class="l" x="666.29" y="539.7">61110</text>
<polygon class="b" points="696.75,553.75 755.27,553.75 755.27,542.25 696.75,542.25"/>
<polyline class="y" points="696.75,548 755.27,548"/>
<path class="d" d="M724,546h3v3h-3z"/><path class="w" d="M725,547h1v1h-1z"/>
<text class="l" x="724.81" y="539.7">61110</text>
<polygon class="b" points="755.27,553.75 813.79,553.75 813.79,542.25 755.27,542.25"/>
<polyline class="y" points="755.27,548 813.79,548"/>
<path class="d" d="M783,546h3v3h-3z"/><path class="w" d="M784,547h1v1h-1z"/>
<text class="l" x="783.33" y="539.7">61110</text>
<polygon class="b" points="813.79,553.75 872.31,553.75 872.31,542.25 813.79,542.25"/>
<polyline class="y" points="813.79,548 872.31,548"/>
<path class="d" d="M841,546h3v3h-3z"/><path class="w" d="M842,547h1v1h-1z"/>
<text class="l" x="841.85" y="539.7">61110</text>
<polygon class="b" points="872.31,553.75 930.83,553.75 930.83,542.25 872.31,542.25"/>
<polyline class="y" points="872.31,548 930.83,548"/>
<path class="d" d="M900,546h3v3h-3z"/><path class="w" d="M901,547h1v1h-1z"/>
<text class="l" x="900.37" y="539.7">61110</text>
<polygon class="b" points="930.83,553.75 989.35,553.75 989.35,542.25 930.83,542.25"/>
<polyline class="y" points="930.83,548 989.35,548"/>
<polygon class="b" points="930.86,542.11 984.92,564.51 989.32,553.89 935.26,531.49"/>
<polyline class="y" style="stroke-width:6px" points="933.06,536.8 987.12,559.2"/>
<path class="d" d="M958,546h3v3h-3z"/><path class="w" d="M959,547h1v1h-1z"/>
<text class="l" transform="translate(962.12 539.97) rotate(22.5)">61164</text>
<polygon class="b" points="989.35,553.75 1043.48,553.75 1043.48,542.25 989.35,542.25"/>
<polyline class="y" points="989.35,548 1043.48,548"/>
<path class="d" d="M1014,546h3v3h-3z"/><path class="w" d="M1015,547h1v1h-1z"/>
<text class="l" x="1015.22" y="539.7">61111</text>
<polygon class="b" points="291.5,564.85 300.07,565.09 308.61,565.81 317.1,567.01 325.51,568.68 333.81,570.82 341.98,573.43 349.99,576.48 345.59,587.11 338.18,584.28 330.63,581.87 322.95,579.89 315.18,578.35 307.33,577.24 299.42,576.57 291.5,576.35"/>
<polygon class="b" points="291.5,576.35 300.07,576.11 308.61,575.39 317.1,574.19 325.51,572.52 333.81,570.38 341.98,567.77 349.99,564.72 345.59,554.09 338.18,556.92 330.63,559.33 322.95,561.31 315.18,562.85 307.33,563.96 299.42,564.63 291.5,564.85"/>
<polygon class="b" points="291.5,576.35 350.02,576.35 350.02,564.85 291.5,564.85"/>
<polyline class="y" points="291.5,570.6 299.75,570.83 307.97,571.52 316.14,572.68 324.23,574.29 332.22,576.35 340.08,578.85 347.79,581.8"/>
<polyline class="y" points="291.5,570.6 299.75,570.37 307.97,569.68 316.14,568.52 324.23,566.91 332.22,564.85 340.08,562.35 347.79,559.4"/>
<polyline class="y" points="291.5,570.6 350.02,570.6"/>
<path class="d" d="M319,569h3v3h-3z"/><path class="w" d="M320,570h1v1h-1z"/>
<text class="l" x="319.56" y="562.3">61160</text>
<polygon class="b" points="350.02,576.35 404.15,576.35 404.15,564.85 350.02,564.85"/>
<polyline class="y" points="350.02,570.6 404.15,570.6"/>
<path class="d" d="M375,569h3v3h-3z"/><path class="w" d="M376,570h1v1h-1z"/>
<text class="l" x="375.89" y="562.3">61111</text>
<polygon class="b" points="404.15,576.35 462.67,576.35 462.67,564.85 404.15,564.85"/>
<polyline class="y" points="404.15,570.6 462.67,570.6"/>
<path class="d" d="M431,569h3v3h-3z"/><path class="w" d="M432,570h1v1h-1z"/>
<text class="l" x="432.21" y="562.3">61110</text>
<polygon class="b" points="462.67,576.35 521.19,576.35 521.19,564.85 462.67,564.85"/>
<polyline class="y" points="462.67,570.6 521.19,570.6"/>
<path class="d" d="M490,569h3v3h-3z"/><path class="w" d="M491,570h1v1h-1z"/>
<text class="l" x="490.73" y="562.3">61110</text>
<polygon class="b" points="521.19,576.35 579.71,576.35 579.71,564.85 521.19,564.85"/>
<polyline class="y" points="521.19,570.6 579.71,570.6"/>
<path class="d" d="M548,569h3v3h-3z"/><path class="w" d="M549,570h1v1h-1z"/>
<text class="l" x="549.25" y="562.3">61110</text>
<polygon class="b" points="579.71,576.35 638.23,576.35 638.23,564.85 579.71,564.85"/>
<polyline class="y" points="579.71,570.6 638.23,570.6"/>
<path class="d" d="M607,569h3v3h-3z"/><path class="w" d="M608,570h1v1h-1z"/>
<text class="l" x="607.77" y="562.3">61110</text>
<polygon class="b" points="638.23,576.35 696.75,576.35 696.75,564.85 638.23,564.85"/>
<polyline class="y" points="638.23,570.6 696.75,570.6"/>
<path class="d" d="M665,569h3v3h-3z"/><path class="w" d="M666,570h1v1h-1z"/>
<text class="l" x="666.29" y="562.3">61110</text>
<polygon class="b" points="696.75,576.35 755.27,576.35 755.27,564.85 696.75,564.85"/>
<polyline class="y" points="696.75,570.6 755.27,570.6"/>
<path class="d" d="M724,569h3v3h-3z"/><path class="w" d="M725,570h1v1h-1z"/>
<text class="l" x="724.81" y="562.3">61110</text>
<polygon class="b" points="755.27,576.35 813.79,576.35 813.79,564.85 755.27,564.85"/>
<polyline class="y" points="755.27,570.6 813.79,570.6"/>
<path class="d" d="M783,569h3v3h-3z"/><path class="w" d="M784,570h1v1h-1z"/>
<text class="l" x="783.33" y="562.3">61110</text>
<polygon class="b" points="813.79,576.35 872.31,576.35 872.31,564.85 813.79,564.85"/>
<polyline class="y" points="813.79,570.6 872.31,570.6"/>
<path class="d" d="M841,569h3v3h-3z"/><path class="w" d="M842,570h1v1h-1z"/>
<text class="l" x="841.85" y="562.3">61110</text>
<polygon class="b" points="872.31,576.35 930.83,576.35 930.83,564.85 872.31,564.85"/>
<polyline class="y" points="872.31,570.6 930.83,570.6"/>
<path class="d" d="M900,569h3v3h-3z"/><path class="w" d="M901,570h1v1h-1z"/>
<text class="l" x="900.37" y="562.3">61110</text>
<polygon class="b" points="930.83,576.35 984.96,576.35 984.96,564.85 930.83,564.85"/>
<polyline class="y" points="930.83,570.6 984.96,570.6"/>
<path class="d" d="M956,569h3v3h-3z"/><path class="w" d="M957,570h1v1h-1z"/>
<text class="l" x="956.7" y="562.3">61111</text>
<polygon class="b" points="1043.48,576.35 1034.91,576.11 1026.37,575.39 1017.88,574.19 1009.47,572.52 1001.17,570.38 993,567.77 984.99,564.72 989.39,554.09 996.8,556.92 1004.35,559.33 1012.03,561.31 1019.81,562.85 1027.66,563.96 1035.56,564.63 1043.48,564.85"/>
<polygon class="b" points="1043.48,564.85 1034.91,565.09 1026.37,565.81 1017.88,567.01 1009.47,568.68 1001.17,570.82 993,573.43 984.99,576.48 989.39,587.11 996.8,584.28 1004.35,581.87 1012.03,579.89 1019.81,578.35 1027.66,577.24 1035.56,576.57 1043.48,576.35"/>
<polygon class="b" points="1043.48,564.85 984.96,564.85 984.96,576.35 1043.48,576.35"/>
<polyline class="y" points="1043.48,570.6 1035.23,570.37 1027.01,569.68 1018.84,568.52 1010.75,566.91 1002.76,564.85 994.9,562.35 987.19,559.4"/>
<polyline class="y" points="1043.48,570.6 1035.23,570.83 1027.01,571.52 1018.84,572.68 1010.75,574.29 1002.76,576.35 994.9,578.85 987.19,581.8"/>
<polyline class="y" points="1043.48,570.6 984.96,570.6"/>
<path class="d" d="M1012,569h3v3h-3z"/><path class="w" d="M1013,570h1v1h-1z"/>
<text class="l" x="1013.02" y="562.3">61160</text>
<polygon class="b" points="291.5,598.75 345.63,598.75 345.63,587.25 291.5,587.25"/>
<polyline class="y" points="291.5,593 345.63,593"/>
<path class="d" d="M317,591h3v3h-3z"/><path class="w" d="M318,592h1v1h-1z"/>
<text class="l" x="317.37" y="584.7">61111</text>
<polygon class="b" points="404.15,598.75 395.58,598.51 387.04,597.79 378.55,596.59 370.14,594.92 361.84,592.78 353.67,590.17 345.66,587.12 350.06,576.49 357.47,579.32 365.02,581.73 372.7,583.71 380.48,585.25 388.33,586.36 396.23,587.03 404.15,587.25"/>
<polygon class="b" points="404.15,587.25 345.63,587.25 345.63,598.75 404.15,598.75"/>
<polyline class="y" points="404.15,593 395.9,592.77 387.68,592.08 379.51,590.92 371.42,589.31 363.43,587.25 355.57,584.75 347.86,581.8"/>
<polyline class="y" points="404.15,593 345.63,593"/>
<path class="d" d="M373,591h3v3h-3z"/><path class="w" d="M374,592h1v1h-1z"/>
<text class="l" x="373.69" y="584.7">61141</text>
<polygon class="b" points="404.15,598.75 462.67,598.75 462.67,587.25 404.15,587.25"/>
<polyline class="y" points="404.15,593 462.67,593"/>
<path class="d" d="M431,591h3v3h-3z"/><path class="w" d="M432,592h1v1h-1z"/>
<text class="l" x="432.21" y="584.7">61110</text>
<polygon class="b" points="462.67,598.75 521.19,598.75 521.19,587.25 462.67,587.25"/>
<polyline class="y" points="462.67,593 521.19,593"/>
<path class="d" d="M490,591h3v3h-3z"/><path class="w" d="M491,592h1v1h-1z"/>
<text class="l" x="490.73" y="584.7">61110</text>
<polygon class="b" points="521.19,598.75 579.71,598.75 579.71,587.25 521.19,587.25"/>
<polyline class="y" points="521.19,593 579.71,593"/>
<path class="d" d="M548,591h3v3h-3z"/><path class="w" d="M549,592h1v1h-1z"/>
<text class="l" x="549.25" y="584.7">61110</text>
<polygon class="b" points="579.71,598.75 638.23,598.75 638.23,587.25 579.71,587.25"/>
<polyline class="y" points="579.71,593 638.23,593"/>
<path class="d" d="M607,591h3v3h-3z"/><path class="w" d="M608,592h1v1h-1z"/>
<text class="l" x="607.77" y="584.7">61110</text>
<polygon class="b" points="638.23,598.75 696.75,598.75 696.75,587.25 638.23,587.25"/>
<polyline class="y" points="638.23,593 696.75,593"/>
<path class="d" d="M665,591h3v3h-3z"/><path class="w" d="M666,592h1v1h-1z"/>
<text class="l" x="666.29" y="584.7">61110</text>
<polygon class="b" points="696.75,598.75 755.27,598.75 755.27,587.25 696.75,587.25"/>
<polyline class="y" points="696.75,593 755.27,593"/>
<path class="d" d="M724,591h3v3h-3z"/><path class="w" d="M725,592h1v1h-1z"/>
<text class="l" x="724.81" y="584.7">61110</text>
<polygon class="b" points="755.27,598.75 813.79,598.75 813.79,587.25 755.27,587.25"/>
<polyline class="y" points="755.27,593 813.79,593"/>
<path class="d" d="M783,591h3v3h-3z"/><path class="w" d="M784,592h1v1h-1z"/>
<text class="l" x="783.33" y="584.7">61110</text>
<polygon class="b" points="813.79,598.75 872.31,598.75 872.31,587.25 813.79,587.25"/>
<polyline class="y" points="813.79,593 872.31,593"/>
<path class="d" d="M841,591h3v3h-3z"/><path class="w" d="M842,592h1v1h-1z"/>
<text class="l" x="841.85" y="584.7">61110</text>
<polygon class="b" points="872.31,598.75 930.83,598.75 930.83,587.25 872.31,587.25"/>
<polyline class="y" points="872.31,593 930.83,593"/>
<path class="d" d="M900,591h3v3h-3z"/><path class="w" d="M901,592h1v1h-1z"/>
<text class="l" x="900.37" y="584.7">61110</text>
<polygon class="b" points="930.83,598.75 939.4,598.51 947.94,597.79 956.43,596.59 964.84,594.92 973.14,592.78 981.31,590.17 989.32,587.12 984.92,576.49 977.51,579.32 969.96,581.73 962.28,583.71 954.51,585.25 946.66,586.36 938.76,587.03 930.83,587.25"/>
<polygon class="b" points="930.83,598.75 989.35,598.75 989.35,587.25 930.83,587.25"/>
<polyline class="y" points="930.83,593 939.08,592.77 947.3,592.08 955.47,590.92 963.56,589.31 971.55,587.25 979.41,584.75 987.12,581.8"/>
<polyline class="y" points="930.83,593 989.35,593"/>
<path class="d" d="M958,591h3v3h-3z"/><path class="w" d="M959,592h1v1h-1z"/>
<text class="l" x="958.89" y="584.7">61140</text>
<polygon class="b" points="399.72,531.49 407.73,528.43 415.9,525.83 424.2,523.69 432.61,522.02 441.1,520.82 449.64,520.1 458.21,519.86 458.21,531.36 450.29,531.58 442.39,532.24 434.54,533.35 426.76,534.9 419.08,536.88 411.53,539.29 404.12,542.11"/>
<polygon class="b" points="404.12,542.11 458.19,519.72 453.79,509.1 399.72,531.49"/>
<polyline class="y" points="401.92,536.8 409.63,533.86 417.49,531.35 425.48,529.29 433.57,527.68 441.74,526.53 449.97,525.84 458.21,525.61"/>
<polyline class="y" points="401.92,536.8 455.99,514.41"/>
<path class="d" d="M427,524h3v3h-3z"/><path class="w" d="M428,525h1v1h-1z"/>
<text class="l" transform="translate(424.71 518.49) rotate(337.5)">61141</text>
<polygon class="b" points="458.19,519.72 478.87,511.15 474.47,500.53 453.79,509.1"/>
<polyline class="y" points="455.99,514.41 476.67,505.84"/>
<path class="d" d="M464,508h3v3h-3z"/><path class="w" d="M465,509h1v1h-1z"/>
<text class="l" transform="translate(462.09 503.01) rotate(337.5)">112</text>
<polygon class="b" points="474.47,500.53 482.48,497.47 490.65,494.87 498.95,492.73 507.36,491.06 515.85,489.86 524.39,489.14 532.96,488.9 532.96,500.4 525.03,500.62 517.13,501.28 509.28,502.39 501.51,503.94 493.83,505.92 486.28,508.33 478.87,511.15"/>
<polyline class="y" points="476.67,505.84 484.38,502.9 492.24,500.39 500.23,498.33 508.32,496.72 516.49,495.57 524.71,494.88 532.96,494.65"/>
<path class="d" d="M502,495h3v3h-3z"/><path class="w" d="M503,496h1v1h-1z"/>
<text class="l" transform="translate(501.47 489.59) rotate(348.75)">61128</text>
<polygon class="b" points="532.96,500.4 591.48,500.4 591.48,488.9 532.96,488.9"/>
<polyline class="y" points="532.96,494.65 591.48,494.65"/>
<path class="d" d="M560,493h3v3h-3z"/><path class="w" d="M561,494h1v1h-1z"/>
<text class="l" x="561.02" y="486.35">61110</text>
<polygon class="b" points="591.48,500.4 650,500.4 650,488.9 591.48,488.9"/>
<polyline class="y" points="591.48,494.65 650,494.65"/>
<path class="d" d="M619,493h3v3h-3z"/><path class="w" d="M620,494h1v1h-1z"/>
<text class="l" x="619.54" y="486.35">61110</text>
<polygon class="b" points="650,500.4 708.52,500.4 708.52,488.9 650,488.9"/>
<polyline class="y" points="650,494.65 708.52,494.65"/>
<path class="d" d="M677,493h3v3h-3z"/><path class="w" d="M678,494h1v1h-1z"/>
<text class="l" x="678.06" y="486.35">61110</text>
<polygon class="b" points="708.52,500.4 767.04,500.4 767.04,488.9 708.52,488.9"/>
<polyline class="y" points="708.52,494.65 767.04,494.65"/>
<path class="d" d="M736,493h3v3h-3z"/><path class="w" d="M737,494h1v1h-1z"/>
<text class="l" x="736.58" y="486.35">61110</text>
<polygon class="b" points="767.04,500.4 796.3,500.4 796.3,488.9 767.04,488.9"/>
<polyline class="y" points="767.04,494.65 796.3,494.65"/>
<path class="d" d="M780,493h3v3h-3z"/><path class="w" d="M781,494h1v1h-1z"/>
<text class="l" x="780.47" y="486.35">113</text>
<polygon class="b" points="458.21,531.36 516.73,531.36 516.73,519.86 458.21,519.86"/>
<polyline class="y" points="458.21,525.61 516.73,525.61"/>
<path class="d" d="M485,524h3v3h-3z"/><path class="w" d="M486,525h1v1h-1z"/>
<text class="l" x="486.27" y="517.31">61110</text>
<polygon class="b" points="516.73,531.36 575.25,531.36 575.25,519.86 516.73,519.86"/>
<polyline class="y" points="516.73,525.61 575.25,525.61"/>
<path class="d" d="M544,524h3v3h-3z"/><path class="w" d="M545,525h1v1h-1z"/>
<text class="l" x="544.79" y="517.31">61110</text>
<polygon class="b" points="575.25,531.36 633.77,531.36 633.77,519.86 575.25,519.86"/>
<polyline class="y" points="575.25,525.61 633.77,525.61"/>
<path class="d" d="M603,524h3v3h-3z"/><path class="w" d="M604,525h1v1h-1z"/>
<text class="l" x="603.31" y="517.31">61110</text>
<polygon class="b" points="633.77,531.36 692.29,531.36 692.29,519.86 633.77,519.86"/>
<polyline class="y" points="633.77,525.61 692.29,525.61"/>
<path class="d" d="M661,524h3v3h-3z"/><path class="w" d="M662,525h1v1h-1z"/>
<text class="l" x="661.83" y="517.31">61110</text>
<polygon class="b" points="692.29,531.36 746.42,531.36 746.42,519.86 692.29,519.86"/>
<polyline class="y" points="692.29,525.61 746.42,525.61"/>
<path class="d" d="M717,524h3v3h-3z"/><path class="w" d="M718,525h1v1h-1z"/>
<text class="l" x="718.16" y="517.31">61111</text>
<polygon class="b" points="746.42,531.36 800.55,531.36 800.55,519.86 746.42,519.86"/>
<polyline class="y" points="746.42,525.61 800.55,525.61"/>
<path class="d" d="M771,524h3v3h-3z"/><path class="w" d="M772,525h1v1h-1z"/>
<text class="l" x="772.29" y="517.31">61111</text>
<polygon class="b" points="800.55,531.36 854.69,531.36 854.69,519.86 800.55,519.86"/>
<polyline class="y" points="800.55,525.61 854.69,525.61"/>
<path class="d" d="M826,524h3v3h-3z"/><path class="w" d="M827,525h1v1h-1z"/>
<text class="l" x="826.42" y="517.31">61111</text>
<polygon class="b" points="854.69,531.36 877.07,531.36 877.07,519.86 854.69,519.86"/>
<polyline class="y" points="854.69,525.61 877.07,525.61"/>
<path class="d" d="M864,524h3v3h-3z"/><path class="w" d="M865,525h1v1h-1z"/>
<text class="l" x="864.68" y="517.31">112</text>
<polygon class="b" points="877.07,519.86 885.64,520.1 894.18,520.82 902.67,522.02 911.08,523.69 919.38,525.83 927.55,528.43 935.56,531.49 931.16,542.11 923.75,539.29 916.2,536.88 908.52,534.9 900.74,533.35 892.89,532.24 884.99,531.58 877.07,531.36"/>
<polyline class="y" points="877.07,525.61 885.32,525.84 893.54,526.53 901.71,527.68 909.8,529.29 917.79,531.35 925.65,533.86 933.36,536.8"/>
<path class="d" d="M904,526h3v3h-3z"/><path class="w" d="M905,527h1v1h-1z"/>
<text class="l" transform="translate(906.2 520.08) rotate(11.25)">61128</text>
<path d="M299.5,570.8 H1035.48" fill="none" stroke="#fbfb1c" stroke-width="5" shape-rendering="crispEdges"/>
<path class="d" d="M319,569h3v3h-3z"/><path class="w" d="M320,570h1v1h-1z"/>
<path class="d" d="M375,569h3v3h-3z"/><path class="w" d="M376,570h1v1h-1z"/>
<path class="d" d="M431,569h3v3h-3z"/><path class="w" d="M432,570h1v1h-1z"/>
<path class="d" d="M490,569h3v3h-3z"/><path class="w" d="M491,570h1v1h-1z"/>
<path class="d" d="M548,569h3v3h-3z"/><path class="w" d="M549,570h1v1h-1z"/>
<path class="d" d="M607,569h3v3h-3z"/><path class="w" d="M608,570h1v1h-1z"/>
<path class="d" d="M665,569h3v3h-3z"/><path class="w" d="M666,570h1v1h-1z"/>
<path class="d" d="M724,569h3v3h-3z"/><path class="w" d="M725,570h1v1h-1z"/>
<path class="d" d="M783,569h3v3h-3z"/><path class="w" d="M784,570h1v1h-1z"/>
<path class="d" d="M841,569h3v3h-3z"/><path class="w" d="M842,570h1v1h-1z"/>
<path class="d" d="M900,569h3v3h-3z"/><path class="w" d="M901,570h1v1h-1z"/>
<path class="d" d="M956,569h3v3h-3z"/><path class="w" d="M957,570h1v1h-1z"/>
<path class="d" d="M1012,569h3v3h-3z"/><path class="w" d="M1013,570h1v1h-1z"/>
<g shape-rendering="crispEdges" stroke-linecap="round" stroke-linejoin="round">
<rect x="1008" y="596.6" width="50" height="13" fill="#fff"/>
<rect x="1058" y="622.5" width="34" height="13" fill="#fff"/>
<rect x="956.5" y="636" width="14.5" height="12" fill="#fff"/>
<polygon points="342.5,637.4 410,635 490,632 570,629.5 650,626.3 720,621.3 800,613.8 880,607 960,603 1063,598.75 1063,610 1060,622.5 1092,622.5 1092,633.75 960,636.25 880,642 800,648.75 720,655.5 650,660.75 570,663.75 490,667 410,669.8 342.5,670.9" fill="#fff"/>
<polyline points="340,637.5 410,635 490,632 570,629.5 650,626.3 720,621.3 800,613.8 880,607 960,603 1063,598.75" fill="none" stroke="#0808ee" stroke-width="5" />
<polyline points="337.5,646.25 410,644.5 490,641.75 570,638.75 650,635.75 720,630 800,623.25 880,617.5 960,613.75 1063,607.5" fill="none" stroke="#0808ee" stroke-width="5" />
<polyline points="337.5,661 410,659.8 490,657.5 570,654.5 650,651.5 720,646.25 800,639.25 880,632.5 960,627.5 1092,625" fill="none" stroke="#0808ee" stroke-width="5" />
<polyline points="338.5,671 410,669.8 490,667 570,663.75 650,660.75 720,655.5 800,648.75 880,642 960,636.25 1092,633.75" fill="none" stroke="#0808ee" stroke-width="5" />
</g>
<g transform="translate(1100.15 629.55) rotate(180)" fill="#9c9c9c" stroke="#242424" stroke-width="1.1" stroke-linejoin="miter">
<path d="M-1.75,-13.15 H28 V-10.55 H6.75 L1.75,-6.05 V6.05 L6.75,10.55 H28 V13.15 H-1.75 Z"/>
<path d="M1.75,-10.55 V10.55 M1.75,-10.55 H6.75 M1.75,10.55 H6.75" fill="none" stroke-width="0.7"/>
</g>
<circle cx="1100.15" cy="629.55" r="1.6" fill="#fff" stroke="#1818c0" stroke-width="1"/>
<circle cx="150.2" cy="634.5" r="1.6" fill="#c8c8f0" stroke="#1818c0" stroke-width="1"/><circle cx="227.4" cy="626.0" r="1.6" fill="#c8c8f0" stroke="#1818c0" stroke-width="1"/>
<g fill="#ffee20" stroke="#000" stroke-width="1">
<circle cx="1089.5" cy="221.8" r="3.3"/>
<circle cx="1166.8" cy="321.2" r="3.3"/>
<circle cx="163.8" cy="457" r="3.3"/>
<circle cx="109.5" cy="540" r="3.3"/>
<circle cx="291.3" cy="570.6" r="3.3"/>
<circle cx="291.3" cy="593" r="3.3"/>
<circle cx="796.3" cy="494.65" r="3.3"/>
<circle cx="1043.5" cy="570.6" r="3.3"/>
<circle cx="988.8" cy="593" r="3.3"/>
</g>
<g font-family="'Liberation Sans',sans-serif" font-size="11" fill="#000" stroke-width="1">
<rect x="409.5" y="179.5" width="2" height="2" fill="#fff" stroke="#101090" stroke-width="1" shape-rendering="crispEdges"/>
<text transform="translate(408 180.8) rotate(0)" text-anchor="start" font-size="11" fill="#000" stroke="none" textLength="190.5" lengthAdjust="spacingAndGlyphs">PIANO ROSSO 225 CM PENDENZA 2,47</text>
<rect x="1013.5" y="165.5" width="2" height="2" fill="#fff" stroke="#101090" stroke-width="1" shape-rendering="crispEdges"/>
<text transform="translate(1013.5 166) rotate(0)" text-anchor="start" font-size="11" fill="#000" stroke="none" textLength="78" lengthAdjust="spacingAndGlyphs">PENDENZA 2,20</text>
<rect x="215.5" y="379.5" width="2" height="2" fill="#fff" stroke="#101090" stroke-width="1" shape-rendering="crispEdges"/>
<text transform="translate(214.5 380) rotate(0)" text-anchor="start" font-size="11" fill="#000" stroke="none" textLength="78" lengthAdjust="spacingAndGlyphs">PENDENZA 1,98</text>
<rect x="763.5" y="433.5" width="2" height="2" fill="#fff" stroke="#101090" stroke-width="1" shape-rendering="crispEdges"/>
<text transform="translate(763 434) rotate(0)" text-anchor="start" font-size="11" fill="#000" stroke="none" textLength="295.5" lengthAdjust="spacingAndGlyphs">PARTE BLU STAZIONE FANTASMA CON CAPPIO DI RITORNO</text>
<rect x="503.5" y="470.5" width="2" height="2" fill="#fff" stroke="#101090" stroke-width="1" shape-rendering="crispEdges"/>
<text transform="translate(504 471.6) rotate(0)" text-anchor="start" font-size="11" fill="#000" stroke="none" textLength="105" lengthAdjust="spacingAndGlyphs">PIANO GIALLO 10 CM</text>
<rect x="263.5" y="497.5" width="2" height="2" fill="#fff" stroke="#101090" stroke-width="1" shape-rendering="crispEdges"/>
<text transform="translate(262.5 497.5) rotate(0)" text-anchor="start" font-size="11" fill="#000" stroke="none" textLength="78" lengthAdjust="spacingAndGlyphs">PENDENZA 2,10</text>
<text transform="translate(646 204.7) rotate(0)" text-anchor="start" font-size="11" fill="#000" stroke="none" textLength="34.5" lengthAdjust="spacingAndGlyphs">390 cm</text>
<rect x="663.5" y="207.5" width="2" height="2" fill="#fff" stroke="#101090" stroke-width="1" shape-rendering="crispEdges"/>
<text transform="translate(89.5 451.5) rotate(-90)" text-anchor="middle" font-size="11" fill="#000" stroke="none">165 cm</text>
<rect x="92.5" y="448.5" width="2" height="2" fill="#fff" stroke="#101090" stroke-width="1" shape-rendering="crispEdges"/>
<text transform="translate(1237 425.5) rotate(90)" text-anchor="middle" font-size="11" fill="#000" stroke="none">150 cm</text>
<rect x="1233.5" y="426.5" width="2" height="2" fill="#fff" stroke="#101090" stroke-width="1" shape-rendering="crispEdges"/>
<text transform="translate(518 691.5) rotate(180)" text-anchor="middle" font-size="11" fill="#000" stroke="none">290 cm</text>
<rect x="517.5" y="689.5" width="2" height="2" fill="#fff" stroke="#101090" stroke-width="1" shape-rendering="crispEdges"/>
<rect x="941.5" y="667.5" width="2" height="2" fill="#fff" stroke="#101090" stroke-width="1" shape-rendering="crispEdges"/>
<rect x="1088.5" y="645.5" width="2" height="2" fill="#fff" stroke="#101090" stroke-width="1" shape-rendering="crispEdges"/>
<g stroke="#000" shape-rendering="auto">
<line x1="501.5" y1="220" x2="501.5" y2="186" stroke="#000" stroke-width="1" />
<line x1="501.5" y1="186" x2="504.08" y2="190.86" stroke="#000" stroke-width="1" /><line x1="501.5" y1="186" x2="498.92" y2="190.86" stroke="#000" stroke-width="1" />
<line x1="501.5" y1="220" x2="498.92" y2="215.14" stroke="#000" stroke-width="1" /><line x1="501.5" y1="220" x2="504.08" y2="215.14" stroke="#000" stroke-width="1" />
<rect x="501.5" y="202.5" width="2" height="2" fill="#fff" stroke="#101090" stroke-width="1" shape-rendering="crispEdges"/>
<text transform="translate(498 203) rotate(-90)" text-anchor="middle" font-size="11" fill="#000" stroke="none">119</text>
<line x1="1058.7" y1="221.5" x2="1058.7" y2="171" stroke="#000" stroke-width="1" />
<line x1="1058.7" y1="171" x2="1061.28" y2="175.86" stroke="#000" stroke-width="1" /><line x1="1058.7" y1="171" x2="1056.12" y2="175.86" stroke="#000" stroke-width="1" />
<line x1="1058.7" y1="221.5" x2="1056.12" y2="216.64" stroke="#000" stroke-width="1" /><line x1="1058.7" y1="221.5" x2="1061.28" y2="216.64" stroke="#000" stroke-width="1" />
<rect x="1058.5" y="195.5" width="2" height="2" fill="#fff" stroke="#101090" stroke-width="1" shape-rendering="crispEdges"/>
<text transform="translate(1056 197) rotate(-90)" text-anchor="middle" font-size="11" fill="#000" stroke="none">171</text>
<line x1="163" y1="427.5" x2="228.5" y2="385.5" stroke="#000" stroke-width="1" />
<line x1="228.5" y1="385.5" x2="225.81" y2="390.29" stroke="#000" stroke-width="1" /><line x1="228.5" y1="385.5" x2="223.02" y2="385.95" stroke="#000" stroke-width="1" />
<line x1="163" y1="427.5" x2="165.69" y2="422.71" stroke="#000" stroke-width="1" /><line x1="163" y1="427.5" x2="168.48" y2="427.05" stroke="#000" stroke-width="1" />
<rect x="195.5" y="405.5" width="2" height="2" fill="#fff" stroke="#101090" stroke-width="1" shape-rendering="crispEdges"/>
<text transform="translate(190 404.5) rotate(-32.5)" text-anchor="middle" font-size="11" fill="#000" stroke="none">295</text>
<line x1="576.6" y1="501.5" x2="576.6" y2="520.5" stroke="#000" stroke-width="1" />
<line x1="576.6" y1="520.5" x2="574.02" y2="515.64" stroke="#000" stroke-width="1" /><line x1="576.6" y1="520.5" x2="579.18" y2="515.64" stroke="#000" stroke-width="1" />
<line x1="576.6" y1="501.5" x2="579.18" y2="506.36" stroke="#000" stroke-width="1" /><line x1="576.6" y1="501.5" x2="574.02" y2="506.36" stroke="#000" stroke-width="1" />
<rect x="576.5" y="510.5" width="2" height="2" fill="#fff" stroke="#101090" stroke-width="1" shape-rendering="crispEdges"/>
<text transform="translate(579 510.5) rotate(90)" text-anchor="middle" font-size="11" fill="#000" stroke="none">67</text>
<line x1="1223.5" y1="485.6" x2="1235" y2="485.6" stroke="#000" stroke-width="1" />
<line x1="1235" y1="485.6" x2="1230.14" y2="488.18" stroke="#000" stroke-width="1" /><line x1="1235" y1="485.6" x2="1230.14" y2="483.02" stroke="#000" stroke-width="1" />
<line x1="1223.5" y1="485.6" x2="1228.36" y2="483.02" stroke="#000" stroke-width="1" /><line x1="1223.5" y1="485.6" x2="1228.36" y2="488.18" stroke="#000" stroke-width="1" />
<rect x="1228.5" y="485.5" width="2" height="2" fill="#fff" stroke="#101090" stroke-width="1" shape-rendering="crispEdges"/>
<text transform="translate(1229.3 481.3) rotate(0)" text-anchor="middle" font-size="11" fill="#000" stroke="none">42</text>
<line x1="252.5" y1="564.5" x2="293.3" y2="501.5" stroke="#000" stroke-width="1" />
<line x1="293.3" y1="501.5" x2="292.83" y2="506.98" stroke="#000" stroke-width="1" /><line x1="293.3" y1="501.5" x2="288.49" y2="504.17" stroke="#000" stroke-width="1" />
<line x1="252.5" y1="564.5" x2="252.97" y2="559.02" stroke="#000" stroke-width="1" /><line x1="252.5" y1="564.5" x2="257.31" y2="561.83" stroke="#000" stroke-width="1" />
<rect x="272.5" y="532.5" width="2" height="2" fill="#fff" stroke="#101090" stroke-width="1" shape-rendering="crispEdges"/>
<text transform="translate(267.5 525) rotate(-57)" text-anchor="middle" font-size="11" fill="#000" stroke="none">57</text>
</g>
<rect x="250.5" y="561.5" width="3" height="3" fill="#000"/>
<text transform="translate(452 212) rotate(-62)" text-anchor="middle" font-size="11" fill="#000" stroke="none">25</text>
<circle cx="444.5" cy="212.5" r="2" fill="none" stroke="#1818a0" stroke-width="1"/>
<path d="M447,209 l4,-3 M448,215 l5,2" stroke="#000" stroke-width="1" fill="none"/>
<path d="M461.5,598.5 l-3,3 M461.5,598.5 l3,3 M461.5,597.5 v4 M458,601.5 h7" stroke="#000" stroke-width="1" fill="none" shape-rendering="crispEdges"/>
<path d="M614.5,687.5 l-3,3 M614.5,687.5 l3,3 M614.5,686.5 v4 M611,690.5 h7" stroke="#000" stroke-width="1" fill="none" shape-rendering="crispEdges"/>
<path d="M1000.5,643.5 l-3,3 M1000.5,643.5 l3,3 M1000.5,642.5 v4 M997,646.5 h7" stroke="#000" stroke-width="1" fill="none" shape-rendering="crispEdges"/>
<text transform="translate(99 542) rotate(180)" text-anchor="middle" font-size="11" fill="#000" stroke="none">33</text>
<path d="M94.5,541.5 l4,-4 4,4" fill="none" stroke="#000" stroke-width="1"/>
<rect x="97.5" y="538.5" width="2" height="2" fill="#fff" stroke="#101090" stroke-width="1" shape-rendering="crispEdges"/>
<text x="1075.5" y="621.3" class="l">113</text>
<text x="1022.5" y="597" class="l">113</text>
</g>
<g shape-rendering="crispEdges" stroke-linecap="round">
<line x1="278.3" y1="511" x2="278.3" y2="615.5" stroke="#f00a0a" stroke-width="4" />
<line x1="302" y1="624" x2="301.7" y2="652.5" stroke="#f00a0a" stroke-width="4" />
<line x1="258" y1="651" x2="258" y2="684" stroke="#f00a0a" stroke-width="4" />
<line x1="1028.2" y1="512" x2="1028.2" y2="591.5" stroke="#f00a0a" stroke-width="4" />
<line x1="999.8" y1="597" x2="1001.3" y2="645" stroke="#f00a0a" stroke-width="4" />
</g>
</svg></div>

<div id="selpanel" style="position:absolute;left:29px;top:77px;width:106px;height:51px;background:#6e86d8;border-radius:2px 2px 0 0">
<div style="position:absolute;left:0;top:0;width:106px;height:22px;background:linear-gradient(180deg,#8096e0,#6a82d6 50%,#6e86d8)"></div>
<span id="t11" style="position:absolute;left:3px;top:4px;font-size:11px;line-height:14px;color:#d4e0f8;font-weight:bold;font-style:normal;white-space:pre;letter-spacing:0.189px;">Selezione bin...</span>
<div style="position:absolute;left:88px;top:4px;width:13px;height:13px;border:1px solid #f0d8e0;border-radius:2px;background:linear-gradient(135deg,#d08090,#b85068)"><svg width="11" height="11" viewBox="0 0 11 11" style="position:absolute;left:0;top:0"><path d="M2.5,2.5 l6,6 M8.5,2.5 l-6,6" stroke="#fff" stroke-width="1.7"/></svg></div>
<div style="position:absolute;left:3px;top:21px;width:100px;height:26px;background:#ece9d8"></div>
<div style="position:absolute;left:4px;top:22px;width:98px;height:21px;background:#fff;border:1px solid #7f9db9"></div>
<span id="t12" style="position:absolute;left:8.5px;top:26px;font-size:11px;line-height:14px;color:#000;font-weight:normal;font-style:normal;white-space:pre;letter-spacing:0.044px;overflow:hidden;width:73px;display:block;-webkit-text-stroke:.2px #000;">Roco geoLine H</span>
<div style="position:absolute;left:84px;top:24px;width:16px;height:17px;border-radius:2px;background:linear-gradient(180deg,#c8d6fb,#b0c4f4);border:1px solid #b8c8f0"><svg width="14" height="15" viewBox="0 0 14 15" style="position:absolute;left:0;top:0"><path d="M3.5,5.5 l3.5,3.5 3.5,-3.5" stroke="#4d6185" stroke-width="2" fill="none"/></svg></div>
<div style="position:absolute;left:6px;top:46px;width:30px;height:1px;background:#404040;opacity:.5"></div>
</div>
<div id="vscroll">
<div class="sbtn" style="left:1px;top:1px"><svg width="13" height="13" viewBox="0 0 13 13"><path d="M3,8 l3.5,-3.5 3.5,3.5" stroke="#4d6185" stroke-width="2" fill="none"/></svg></div>
<div class="sbtn" style="left:1px;top:833px"><svg width="13" height="13" viewBox="0 0 13 13"><path d="M3,5 l3.5,3.5 3.5,-3.5" stroke="#4d6185" stroke-width="2" fill="none"/></svg></div>
<div class="sbtn" style="left:1px;top:406px;height:44px"><svg width="13" height="42" viewBox="0 0 13 42"><path d="M3.5,17.5 h6 M3.5,19.5 h6 M3.5,21.5 h6 M3.5,23.5 h6" stroke="#eef4fe" stroke-width="1"/><path d="M4,18.5 h6 M4,20.5 h6 M4,22.5 h6 M4,24.5 h6" stroke="#8cb0f8" stroke-width="1"/></svg></div>
</div>
<div id="hscroll">
<div class="sbtn" style="left:1px;top:1px"><svg width="13" height="13" viewBox="0 0 13 13"><path d="M8,3 l-3.5,3.5 3.5,3.5" stroke="#4d6185" stroke-width="2" fill="none"/></svg></div>
<div class="sbtn" style="left:1214px;top:1px"><svg width="13" height="13" viewBox="0 0 13 13"><path d="M5,3 l3.5,3.5 -3.5,3.5" stroke="#4d6185" stroke-width="2" fill="none"/></svg></div>
<div class="sbtn" style="left:565px;top:1px;width:99px"><svg width="97" height="13" viewBox="0 0 97 13"><path d="M45.5,3.5 v6 M47.5,3.5 v6 M49.5,3.5 v6 M51.5,3.5 v6" stroke="#eef4fe" stroke-width="1"/><path d="M46.5,4 v6 M48.5,4 v6 M50.5,4 v6 M52.5,4 v6" stroke="#8cb0f8" stroke-width="1"/></svg></div>
</div>
<div style="position:absolute;left:1262px;top:927px;width:18px;height:17px;background:#ece9d8"></div>
<div id="levelbar">
<div style="position:absolute;left:0;top:0;width:1280px;height:1px;background:#fff"></div>
<div style="position:absolute;left:5px;top:4px;width:3px;height:22px;border-left:1px solid #fff;border-right:1px solid #aca899"></div>
<div class="lv" style="left:17px"><i>1</i><svg style="position:absolute;left:1px;top:9px" width="6" height="6"><path d="M.5,.5 l4,4 M4.5,.5 l-4,4" stroke="#000" stroke-width="1"/></svg></div>
<div class="lv" style="left:40px"><i>2</i></div>
<div class="lv" style="left:63px"><i>3</i></div>
<div class="lv" style="left:86px"><i>4</i></div>
<div class="lv" style="left:109px"><i>5</i></div>
<div class="lv" style="left:132px"><i>6</i></div>
<div class="lv" style="left:155px"><i>7</i></div>
<div class="lv" style="left:178px"><i>8</i></div>
<div class="lv" style="left:201px"><i>9</i></div>
<div class="lv" style="left:224px"><i>10</i><div style="position:absolute;left:1px;top:-1px;width:3px;height:3px;background:#000"></div></div>
<div class="lv" style="left:247px"><i>11</i></div>
<div class="lv" style="left:270px"><i>12</i></div>
<div class="lv" style="left:293px"><i>13</i></div>
<div class="lv" style="left:316px"><i>14</i></div>
<div class="lv" style="left:339px"><i>15</i></div>
<div class="lv" style="left:362px"><i>16</i></div>
<div class="lv" style="left:385px"><i>17</i></div>
<div class="lv" style="left:408px"><i>18</i></div>
<div class="lv" style="left:431px"><i>19</i></div>
<div class="lv" style="left:454px"><i>20</i></div>
<div class="lv" style="left:477px"><i>21</i></div>
<div class="lv" style="left:500px"><i>22</i></div>
<div class="lv" style="left:523px"><i>23</i></div>
<div class="lv" style="left:546px"><i>24</i></div>
<div class="lv" style="left:569px"><i>25</i></div>
<div class="lv" style="left:592px"><i>26</i></div>
<div class="lv" style="left:615px"><i>27</i></div>
<div class="lv" style="left:638px"><i>28</i></div>
<div class="lv" style="left:661px"><i>29</i></div>
<div class="lv" style="left:684px"><i>30</i></div>
<div class="sep" style="left:710px;top:4px;height:22px"></div>
<div style="position:absolute;left:716px;top:4px;width:22px;height:21px;background:#fff;border:1px solid #98a4c0;border-radius:3px"></div>
<svg class="ic" style="position:absolute;left:719px;top:6px" width="16" height="16" viewBox="0 0 16 16"><path d="M1,5 l3,-3 h11 l-3,3z" fill="#206020" stroke="#000" stroke-width="0.8" /><path d="M1,8.5 l3,-3 h11 l-3,3z" fill="#d01010" stroke="#000" stroke-width="0.8" /><path d="M1,12 l3,-3 h11 l-3,3z" fill="#e8d020" stroke="#000" stroke-width="0.8" /><path d="M1,15.5 l3,-3 h11 l-3,3z" fill="#000080" stroke="#000" stroke-width="0.8" /><path d="M12,0 l3,2" fill="none" stroke="#000" stroke-width="1" /></svg>
<svg class="ic" style="position:absolute;left:742px;top:6px" width="16" height="16" viewBox="0 0 16 16"><path d="M2,4 l3,-3 h9 l-3,3z" fill="none" stroke="#d0b0a8" stroke-width="1" /><path d="M1,9 l3,-3 h11 l-3,3z" fill="#d01010" stroke="#901010" stroke-width="0.8" /><path d="M2,14 l3,-3 h9 l-3,3z" fill="none" stroke="#d0b0a8" stroke-width="1" /><path d="M14,1 L3,14" fill="none" stroke="#d0b0a8" stroke-width="1" /></svg>
<svg class="ic" style="position:absolute;left:764px;top:6px" width="16" height="16" viewBox="0 0 16 16"><path d="M2,5 l3,-3 h10 l-3,3z" fill="#a8a498" stroke="#a8a498" stroke-width="0.8" /><path d="M2,14.5 l3,-3.5 h10 l-3,3.5z" fill="none" stroke="#a6a292" stroke-width="1" /><path d="M8,5 v5 M6,8 l2,2 2,-2" fill="none" stroke="#a6a292" stroke-width="1.2" /></svg>
<div class="sep" style="left:787px;top:4px;height:22px"></div>
<svg class="ic" style="position:absolute;left:795px;top:6px" width="16" height="16" viewBox="0 0 16 16"><path d="M1,5 l3,-3 h10 l-3,3z" fill="#20c0c0" stroke="#000" stroke-width="0.8" /><path d="M1,9 l3,-3 h10 l-3,3z" fill="#e8d020" stroke="#000" stroke-width="0.8" /><path d="M1,13 l3,-3 h10 l-3,3z" fill="#f0f0f0" stroke="#000" stroke-width="0.8" /><text x="10.5" y="16" font-size="9" font-weight="bold" fill="#000080" font-family="'Liberation Sans',sans-serif">?</text></svg>
<div class="sep" style="left:818px;top:4px;height:22px"></div>
<svg class="ic" style="position:absolute;left:826px;top:6px" width="16" height="16" viewBox="0 0 16 16"><rect x="1" y="1.5" width="14" height="13" fill="none" stroke="#a6a292" stroke-width="1"/><rect x="3" y="3.5" width="10" height="9" fill="none" stroke="#c8c4b4" stroke-width="1"/><text x="5.5" y="11.5" font-size="9" font-weight="normal" fill="#a6a292" font-family="'Liberation Sans',sans-serif">1</text></svg>
<svg class="ic" style="position:absolute;left:849px;top:6px" width="16" height="16" viewBox="0 0 16 16"><rect x="1" y="1.5" width="14" height="13" fill="none" stroke="#a6a292" stroke-width="1"/><rect x="3" y="3.5" width="10" height="9" fill="none" stroke="#c8c4b4" stroke-width="1"/><text x="5.5" y="11.5" font-size="9" font-weight="normal" fill="#a6a292" font-family="'Liberation Sans',sans-serif">2</text></svg>
<svg class="ic" style="position:absolute;left:872px;top:6px" width="16" height="16" viewBox="0 0 16 16"><rect x="1" y="1.5" width="14" height="13" fill="none" stroke="#a6a292" stroke-width="1"/><rect x="3" y="3.5" width="10" height="9" fill="none" stroke="#c8c4b4" stroke-width="1"/><text x="5.5" y="11.5" font-size="9" font-weight="normal" fill="#a6a292" font-family="'Liberation Sans',sans-serif">3</text></svg>
<svg class="ic" style="position:absolute;left:895px;top:6px" width="16" height="16" viewBox="0 0 16 16"><rect x="1" y="1.5" width="14" height="13" fill="none" stroke="#a6a292" stroke-width="1"/><rect x="3" y="3.5" width="10" height="9" fill="none" stroke="#c8c4b4" stroke-width="1"/><text x="5.5" y="11.5" font-size="9" font-weight="normal" fill="#a6a292" font-family="'Liberation Sans',sans-serif">4</text></svg>
<svg class="ic" style="position:absolute;left:918px;top:6px" width="16" height="16" viewBox="0 0 16 16"><rect x="1" y="1.5" width="14" height="13" fill="none" stroke="#a6a292" stroke-width="1"/><rect x="3" y="3.5" width="10" height="9" fill="none" stroke="#c8c4b4" stroke-width="1"/><text x="5.5" y="11.5" font-size="9" font-weight="normal" fill="#a6a292" font-family="'Liberation Sans',sans-serif">5</text></svg>
<div style="position:absolute;left:944px;top:1px;width:2px;height:28px;border-left:1px solid #aca899;border-right:1px solid #fff"></div>
<div style="position:absolute;left:0;top:28px;width:1280px;height:3px;background:linear-gradient(180deg,#e0ddd0,#b8b4a4 60%,#8c8a7c)"></div>
</div>
<div id="status">
<span id="t13" style="position:absolute;left:2px;top:2px;font-size:11px;line-height:14px;color:#000;font-weight:normal;font-style:normal;white-space:pre;letter-spacing:-0.248px;">Premi il tasto F1 per la Guida</span>
<span id="t14" style="position:absolute;left:845.5px;top:2px;font-size:11px;line-height:14px;color:#000;font-weight:normal;font-style:normal;white-space:pre;letter-spacing:-0.167px;">Ro61110/200mm/Livello 10</span>
<span id="t15" style="position:absolute;left:1125px;top:2px;font-size:11px;line-height:14px;color:#000;font-weight:normal;font-style:normal;white-space:pre;letter-spacing:0.205px;">&lt;- 2110 -&gt;</span>
<span id="t16" style="position:absolute;left:1192px;top:2px;font-size:11px;line-height:14px;color:#000;font-weight:normal;font-style:normal;white-space:pre;letter-spacing:0.099px;">+00311</span>
<span id="t17" style="position:absolute;left:1238px;top:2px;font-size:11px;line-height:14px;color:#000;font-weight:normal;font-style:normal;white-space:pre;letter-spacing:-0.003px;">+00184</span>
<div style="position:absolute;left:1118px;top:2px;width:2px;height:15px;border-left:1px solid #c8c4b4;border-right:1px solid #fff"></div>
<div style="position:absolute;left:1186px;top:2px;width:2px;height:15px;border-left:1px solid #c8c4b4;border-right:1px solid #fff"></div>
<div style="position:absolute;left:1232px;top:2px;width:2px;height:15px;border-left:1px solid #c8c4b4;border-right:1px solid #fff"></div>
<div style="position:absolute;left:1278px;top:2px;width:2px;height:15px;border-left:1px solid #c8c4b4;border-right:1px solid #fff"></div>
</div>
<div id="taskbar">
<div id="start"><svg style="position:absolute;left:10px;top:5px" width="20" height="20" viewBox="0 0 20 20"><path d="M2,4 q3,-2 6,0 l-1.2,5 q-3,-2 -6,0z" fill="#e8502a"/><path d="M9.5,4.5 q3,2 6,0 l-1.2,5 q-3,2 -6,0z" fill="#7ac043"/><path d="M.5,10.5 q3,-2 6,0 l-1.2,5 q-3,-2 -6,0z" fill="#3a8ee6"/><path d="M8,11 q3,2 6,0 l-1.2,5 q-3,2 -6,0z" fill="#f8c828"/></svg>
<span id="t18" style="position:absolute;left:34.5px;top:3.5px;font-size:19px;line-height:22px;color:#fff;font-weight:bold;font-style:italic;white-space:pre;letter-spacing:-0.738px;text-shadow:1px 1px 1px #1c4a1c;">start</span>
</div>
<div class="tb act" style="left:107px;width:159px"></div>
<svg style="position:absolute;left:116px;top:6px" width="18" height="18" viewBox="0 0 16 18"><rect x="1" y="4" width="14" height="12" fill="#181840"/><rect x="6" y="3" width="9" height="8" fill="#181840" stroke="#e0e0f0" stroke-width=".8"/><text x="7" y="10" font-size="7.5" font-weight="bold" font-family="'Liberation Sans',sans-serif" fill="#fff">10</text><path d="M0,8 h6 M1,6 l3,4 M4,6 l-3,4" stroke="#e8e8e8" stroke-width="1" fill="none"/><path d="M1,13.5 h12 M1,16 h12" stroke="#c02020" stroke-width="1.6"/></svg>
<span id="t19" style="position:absolute;left:137px;top:8px;font-size:11px;line-height:14px;color:#fff;font-weight:normal;font-style:normal;white-space:pre;letter-spacing:0.062px;">WinTrack  V10.0 - [tr...</span>
<div class="tb" style="left:268px;width:157px"></div>
<svg style="position:absolute;left:276px;top:6px" width="17" height="18" viewBox="0 0 17 18"><path d="M4,1 h9 l3,3 v13 h-12z" fill="#fff" stroke="#606880" stroke-width=".8"/><rect x="1" y="4" width="9" height="9" fill="#2a4a9c"/><text x="1.5" y="11.5" font-size="8" font-weight="bold" font-family="'Liberation Sans',sans-serif" fill="#fff">W</text></svg>
<span id="t20" style="position:absolute;left:295px;top:8px;font-size:11px;line-height:14px;color:#fff;font-weight:normal;font-style:normal;white-space:pre;letter-spacing:-0.02px;">545 - Microsoft Word</span>
<div class="tb" style="left:428px;width:157px"></div>
<svg style="position:absolute;left:436px;top:6px" width="17" height="18" viewBox="0 0 17 18"><path d="M5,1 h8 l3,3 v13 h-11z" fill="#fff" stroke="#606880" stroke-width=".8"/><circle cx="7" cy="10" r="4.6" fill="none" stroke="#1c60c8" stroke-width="2.2"/><path d="M2,10 h9" stroke="#1c60c8" stroke-width="1.8"/><path d="M1,13 q7,-10 12,-8" stroke="#e8b020" stroke-width="1.2" fill="none"/></svg>
<span id="t21" style="position:absolute;left:455.8px;top:8px;font-size:11px;line-height:14px;color:#fff;font-weight:normal;font-style:normal;white-space:pre;letter-spacing:-0.005px;">Google - Microsoft Int...</span>
<span id="t22" style="position:absolute;left:1116px;top:8px;font-size:11px;line-height:14px;color:#fff;font-weight:normal;font-style:normal;white-space:pre;letter-spacing:-0.141px;">IT</span>
<svg style="position:absolute;left:1136px;top:7px" width="16" height="17" viewBox="0 0 16 17"><path d="M1.5,1.5 h12 v11 h-5 l3,3.5 -6,-3.5 h-4z" fill="#f8f4d8" stroke="#202020" stroke-width="1"/><text x="4.5" y="11" font-size="10" font-weight="bold" font-family="'Liberation Sans',sans-serif" fill="#000">?</text></svg>
<svg style="position:absolute;left:1159px;top:6px" width="14" height="20" viewBox="0 0 14 20"><path d="M5,1.5 h6 v4 h-2 M3,3.5 h6 v4 h-6z" stroke="#e0e8f8" stroke-width="1.2" fill="none"/><path d="M3.5,13.5 h6 l-3,3.5z" fill="#e0e8f8"/></svg>
<div id="tray"></div>
<div style="position:absolute;left:1177px;top:4px;width:21px;height:21px;border-radius:11px;background:radial-gradient(circle at 35% 30%,#7ec8ff,#1c7ae8 60%,#1058c0);box-shadow:0 0 0 1px #0c48a8"><svg width="21" height="21" viewBox="0 0 21 21"><path d="M12,6 l-4.5,4.5 4.5,4.5" stroke="#fff" stroke-width="2.2" fill="none"/></svg></div>
<svg style="position:absolute;left:1198px;top:6px" width="18" height="18" viewBox="0 0 18 18"><rect x="6" y="1" width="10" height="8" fill="#5868a8" stroke="#c8d0e8" stroke-width="1"/><rect x="1" y="6" width="10" height="8" fill="#404888" stroke="#c8d0e8" stroke-width="1"/><path d="M3,16.5 h7 M10,11.5 h6" stroke="#c8d0e8" stroke-width="1.4"/></svg>
<svg style="position:absolute;left:1216px;top:6px" width="17" height="17" viewBox="0 0 17 17"><circle cx="8.5" cy="8.5" r="8" fill="#e87818" stroke="#a04808" stroke-width=".8"/><path d="M5,9 a3.8,3.8 0 1 1 3.5,3.8" stroke="#fff" stroke-width="2.2" fill="none"/></svg>
<span id="t23" style="position:absolute;left:1238.8px;top:8px;font-size:11px;line-height:14px;color:#fff;font-weight:normal;font-style:normal;white-space:pre;letter-spacing:-0.006px;">20.28</span>
</div>
</div>
</body>
</html>
